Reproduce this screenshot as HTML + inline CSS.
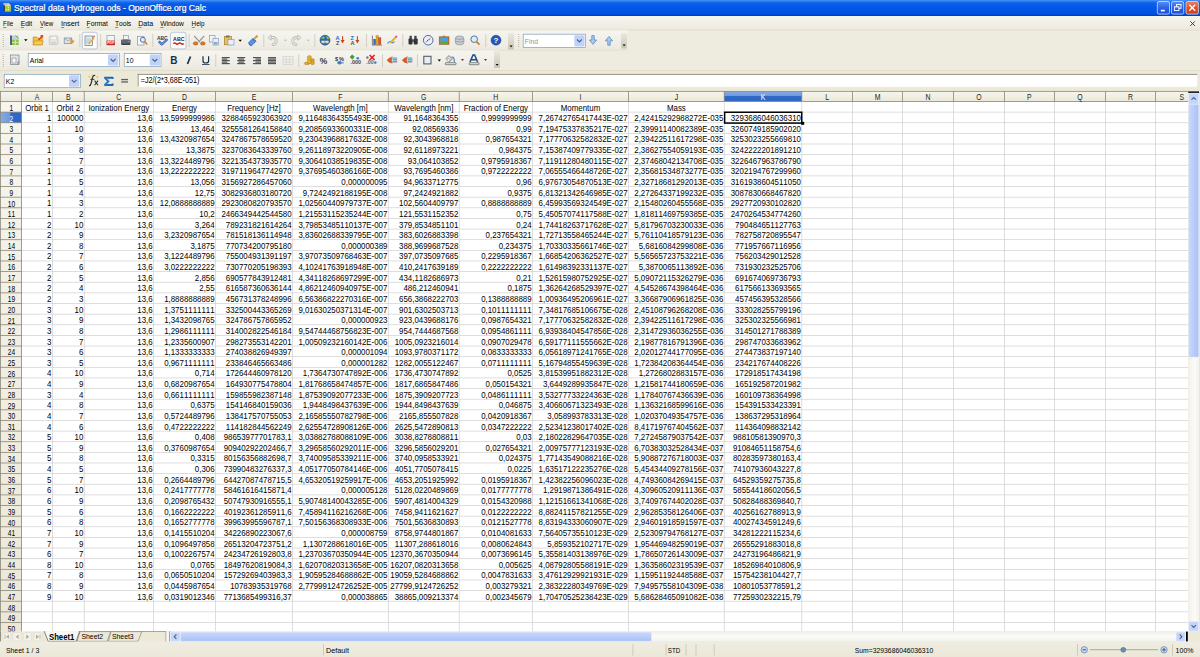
<!DOCTYPE html><html><head><meta charset="utf-8"><style>
*{margin:0;padding:0;box-sizing:border-box}
html,body{width:1200px;height:657px;overflow:hidden;background:#ece9d8;font-family:"Liberation Sans",sans-serif}
.a{position:absolute}
.t{position:absolute;white-space:nowrap;line-height:1}
svg{position:absolute;left:0;top:0}

</style></head><body>
<svg width="1200" height="657" viewBox="0 0 1200 657" style="font-family:'Liberation Sans',sans-serif;font-kerning:none"><defs>
<linearGradient id="gTitle" x1="0" y1="0" x2="0" y2="1">
 <stop offset="0" stop-color="#4a98fa"/><stop offset="0.08" stop-color="#2a7af2"/><stop offset="0.2" stop-color="#0c5fea"/>
 <stop offset="0.6" stop-color="#0055e5"/><stop offset="0.88" stop-color="#0052e2"/><stop offset="0.94" stop-color="#0044cc"/><stop offset="1" stop-color="#003cb8"/>
</linearGradient>
<linearGradient id="gMenu" x1="0" y1="0" x2="0" y2="1">
 <stop offset="0" stop-color="#f7f6f1"/><stop offset="1" stop-color="#ebe9dd"/>
</linearGradient>
<linearGradient id="gTB" x1="0" y1="0" x2="0" y2="1">
 <stop offset="0" stop-color="#f6f5f0"/><stop offset="1" stop-color="#ebe9df"/>
</linearGradient>
<linearGradient id="gHdr" x1="0" y1="0" x2="0" y2="1">
 <stop offset="0" stop-color="#f7f6ee"/><stop offset="1" stop-color="#ebe8d8"/>
</linearGradient>
<linearGradient id="gSel" x1="0" y1="0" x2="0" y2="1">
 <stop offset="0" stop-color="#86abe6"/><stop offset="0.45" stop-color="#6e98de"/><stop offset="0.5" stop-color="#3169c6"/><stop offset="1" stop-color="#2e66c6"/>
</linearGradient>
<linearGradient id="gSelH" x1="0" y1="0" x2="1" y2="0">
 <stop offset="0" stop-color="#86abe6"/><stop offset="0.45" stop-color="#6e98de"/><stop offset="0.5" stop-color="#3169c6"/><stop offset="1" stop-color="#2e66c6"/>
</linearGradient>
<linearGradient id="gBtn" x1="0" y1="0" x2="0" y2="1">
 <stop offset="0" stop-color="#5a8ef5"/><stop offset="0.5" stop-color="#2a63e8"/><stop offset="1" stop-color="#1d4fd8"/>
</linearGradient>
<linearGradient id="gClose" x1="0" y1="0" x2="0" y2="1">
 <stop offset="0" stop-color="#e9805e"/><stop offset="0.5" stop-color="#e0542e"/><stop offset="1" stop-color="#cc3d18"/>
</linearGradient>
<linearGradient id="gHandle" x1="0" y1="0" x2="0" y2="1">
 <stop offset="0" stop-color="#ebe9df"/><stop offset="1" stop-color="#c9c6b4"/>
</linearGradient>
<linearGradient id="gScrollV" x1="0" y1="0" x2="1" y2="0">
 <stop offset="0" stop-color="#c8d6fb"/><stop offset="0.5" stop-color="#b9cdfa"/><stop offset="1" stop-color="#a9c0f4"/>
</linearGradient>
<linearGradient id="gScrollH" x1="0" y1="0" x2="0" y2="1">
 <stop offset="0" stop-color="#c8d6fb"/><stop offset="0.5" stop-color="#b9cdfa"/><stop offset="1" stop-color="#a9c0f4"/>
</linearGradient>
<linearGradient id="gTrackH" x1="0" y1="0" x2="0" y2="1">
 <stop offset="0" stop-color="#f0efe9"/><stop offset="0.5" stop-color="#fbfbf9"/><stop offset="1" stop-color="#f3f2ec"/>
</linearGradient>
<linearGradient id="gTrackV" x1="0" y1="0" x2="1" y2="0">
 <stop offset="0" stop-color="#f0efe9"/><stop offset="0.5" stop-color="#fbfbf9"/><stop offset="1" stop-color="#f3f2ec"/>
</linearGradient>
<linearGradient id="gStatus" x1="0" y1="0" x2="0" y2="1">
 <stop offset="0" stop-color="#efede2"/><stop offset="1" stop-color="#ebe8d8"/>
</linearGradient>
</defs><rect x="0" y="0" width="1200" height="16" fill="url(#gTitle)"/><path d="M3.4 3 h5.4 l2 2 v6.6 h-7.4z" fill="#d6dadc" stroke="#60686e" stroke-width="0.4"/><rect x="3.3" y="5.2" width="1.5" height="6.4" fill="#1e262e"/><rect x="5" y="6.2" width="5.8" height="5.2" fill="#a8c82c"/><circle cx="8.4" cy="7.6" r="0.6" fill="#f0f6e0"/><circle cx="6.4" cy="9.6" r="0.6" fill="#f0f6e0"/><circle cx="8.4" cy="9.6" r="0.6" fill="#f0f6e0"/><path d="M4 4.3 h4 M4 5 h3" stroke="#a0a8ac" stroke-width="0.4"/><text transform="translate(14.5 11.8) scale(1 1.12)" font-size="8.3" fill="#0a2a80" stroke="#0a2a80" stroke-width="0.25" opacity="0.4" textLength="192" lengthAdjust="spacingAndGlyphs">Spectral data Hydrogen.ods - OpenOffice.org Calc</text><text transform="translate(14 11.3) scale(1 1.12)" font-size="8.3" fill="#ffffff" stroke="#ffffff" stroke-width="0.22" textLength="192" lengthAdjust="spacingAndGlyphs">Spectral data Hydrogen.ods - OpenOffice.org Calc</text><rect x="1157.3" y="1.5" width="12.2" height="12.6" rx="1.6" fill="url(#gBtn)" stroke="#e8eefc" stroke-width="0.7"/><rect x="1171.5" y="1.5" width="12.2" height="12.6" rx="1.6" fill="url(#gBtn)" stroke="#e8eefc" stroke-width="0.7"/><rect x="1160.8" y="9.8" width="4" height="1.6" fill="#fff"/><rect x="1176.5" y="4.5" width="4.5" height="3.8" fill="none" stroke="#fff" stroke-width="0.9"/><rect x="1174.4" y="6.8" width="4.5" height="3.8" fill="url(#gBtn)" stroke="#fff" stroke-width="0.9"/><rect x="1186" y="1.5" width="12.4" height="12.6" rx="1.6" fill="url(#gClose)" stroke="#f2e6e0" stroke-width="0.7"/><path d="M1189.3 4.8 L1195.2 10.8 M1195.2 4.8 L1189.3 10.8" stroke="#fff" stroke-width="1.3"/><rect x="0" y="16" width="1200" height="14.4" fill="url(#gMenu)"/><rect x="0" y="29.8" width="1200" height="0.7" fill="#d6d2c2"/><text transform="translate(3.1 26.4) scale(1 1.12)" font-size="7" fill="#000" textLength="10.0" lengthAdjust="spacingAndGlyphs">File</text><rect x="3.3000000000000003" y="27.1" width="3" height="0.6" fill="#000" opacity="0.7"/><text transform="translate(20.7 26.4) scale(1 1.12)" font-size="7" fill="#000" textLength="11.5" lengthAdjust="spacingAndGlyphs">Edit</text><rect x="20.9" y="27.1" width="3" height="0.6" fill="#000" opacity="0.7"/><text transform="translate(39.9 26.4) scale(1 1.12)" font-size="7" fill="#000" textLength="13.3" lengthAdjust="spacingAndGlyphs">View</text><rect x="40.1" y="27.1" width="3" height="0.6" fill="#000" opacity="0.7"/><text transform="translate(60.9 26.4) scale(1 1.12)" font-size="7" fill="#000" textLength="18.3" lengthAdjust="spacingAndGlyphs">Insert</text><rect x="61.1" y="27.1" width="3" height="0.6" fill="#000" opacity="0.7"/><text transform="translate(86.5 26.4) scale(1 1.12)" font-size="7" fill="#000" textLength="21.4" lengthAdjust="spacingAndGlyphs">Format</text><rect x="86.7" y="27.1" width="3" height="0.6" fill="#000" opacity="0.7"/><text transform="translate(114.9 26.4) scale(1 1.12)" font-size="7" fill="#000" textLength="16.3" lengthAdjust="spacingAndGlyphs">Tools</text><rect x="115.10000000000001" y="27.1" width="3" height="0.6" fill="#000" opacity="0.7"/><text transform="translate(138.2 26.4) scale(1 1.12)" font-size="7" fill="#000" textLength="15.0" lengthAdjust="spacingAndGlyphs">Data</text><rect x="138.39999999999998" y="27.1" width="3" height="0.6" fill="#000" opacity="0.7"/><text transform="translate(160.2 26.4) scale(1 1.12)" font-size="7" fill="#000" textLength="23.7" lengthAdjust="spacingAndGlyphs">Window</text><rect x="160.39999999999998" y="27.1" width="3" height="0.6" fill="#000" opacity="0.7"/><text transform="translate(191.6 26.4) scale(1 1.12)" font-size="7" fill="#000" textLength="12.9" lengthAdjust="spacingAndGlyphs">Help</text><rect x="191.79999999999998" y="27.1" width="3" height="0.6" fill="#000" opacity="0.7"/><path d="M1190.3 21.3 L1194.9 25.9 M1194.9 21.3 L1190.3 25.9" stroke="#404040" stroke-width="1"/><rect x="0" y="30.5" width="1200" height="39.5" fill="#eeecdf"/><rect x="0" y="30.5" width="515" height="19.8" fill="url(#gTB)"/><rect x="515.5" y="30.5" width="112" height="19.8" fill="url(#gTB)"/><rect x="0" y="49.8" width="515" height="0.6" fill="#dcd9cb"/><rect x="515.5" y="49.8" width="112" height="0.6" fill="#dcd9cb"/><rect x="2.8" y="34.00" width="0.9" height="0.9" fill="#a8a590"/><rect x="2.8" y="36.00" width="0.9" height="0.9" fill="#a8a590"/><rect x="2.8" y="38.00" width="0.9" height="0.9" fill="#a8a590"/><rect x="2.8" y="40.00" width="0.9" height="0.9" fill="#a8a590"/><rect x="2.8" y="42.00" width="0.9" height="0.9" fill="#a8a590"/><rect x="2.8" y="44.00" width="0.9" height="0.9" fill="#a8a590"/><rect x="2.8" y="46.00" width="0.9" height="0.9" fill="#a8a590"/><rect x="518.3" y="34.00" width="0.9" height="0.9" fill="#a8a590"/><rect x="518.3" y="36.00" width="0.9" height="0.9" fill="#a8a590"/><rect x="518.3" y="38.00" width="0.9" height="0.9" fill="#a8a590"/><rect x="518.3" y="40.00" width="0.9" height="0.9" fill="#a8a590"/><rect x="518.3" y="42.00" width="0.9" height="0.9" fill="#a8a590"/><rect x="518.3" y="44.00" width="0.9" height="0.9" fill="#a8a590"/><rect x="518.3" y="46.00" width="0.9" height="0.9" fill="#a8a590"/><rect x="508" y="33" width="6" height="16.5" fill="url(#gHandle)"/><path d="M509.6 45.5 h3 l-1.5 1.8z" fill="#000"/><rect x="621" y="33" width="6" height="15.5" fill="url(#gHandle)"/><path d="M622.6 44.5 h3 l-1.5 1.8z" fill="#000"/><rect x="79.5" y="34" width="0.7" height="13" fill="#c5c2b2"/><rect x="100.4" y="34" width="0.7" height="13" fill="#c5c2b2"/><rect x="152.5" y="34" width="0.7" height="13" fill="#c5c2b2"/><rect x="188.7" y="34" width="0.7" height="13" fill="#c5c2b2"/><rect x="263.5" y="34" width="0.7" height="13" fill="#c5c2b2"/><rect x="314.5" y="34" width="0.7" height="13" fill="#c5c2b2"/><rect x="366" y="34" width="0.7" height="13" fill="#c5c2b2"/><rect x="402.5" y="34" width="0.7" height="13" fill="#c5c2b2"/><rect x="485.5" y="34" width="0.7" height="13" fill="#c5c2b2"/><rect x="82.3" y="32.3" width="15" height="16.6" rx="2" fill="#fbfbf8" stroke="#9fb4d2" stroke-width="0.7"/><rect x="170.5" y="32.3" width="15.5" height="16.6" rx="2" fill="#fbfbf8" stroke="#9fb4d2" stroke-width="0.7"/><rect x="10.2" y="35.5" width="8.4" height="9.5" fill="#c6d0d8"/><rect x="10.2" y="35.5" width="1.6" height="9.5" fill="#2c4a70"/><rect x="12" y="39.8" width="6.6" height="5.2" fill="#8cc43c"/><path d="M12 42.4 h6.6 M15.3 39.8 v5.2" stroke="#f0f8e0" stroke-width="0.7"/><path d="M15.5 35.5 l3.1 3" stroke="#5a9a30" stroke-width="0.8"/><path d="M24.1 39.3 h3.4 l-1.7 1.87z" fill="#000"/><path d="M33.2 37 h3.5 l1 1.2 h4.5 v6.6 h-9z" fill="#f0c040" stroke="#c07a10" stroke-width="0.6"/><path d="M34.5 41 h8.8 l-1.3 3.8 h-8.8z" fill="#f8d050" stroke="#c07a10" stroke-width="0.5"/><path d="M38.5 40 l3.5 -3.5" stroke="#d04010" stroke-width="1.3"/><rect x="40.6" y="35" width="2.6" height="2.6" fill="#e04818"/><rect x="49.3" y="36" width="8.6" height="8.6" rx="0.8" fill="#e6e6e2" stroke="#c0c0bc" stroke-width="0.7"/><rect x="51" y="36.4" width="5.2" height="3.4" fill="#f6f6f4" stroke="#c8c8c4" stroke-width="0.4"/><rect x="51" y="41.8" width="5.2" height="2.5" fill="#d4d4d0"/><rect x="64.2" y="38" width="7.5" height="5.6" fill="#dfe4ea" stroke="#7a8694" stroke-width="0.7"/><path d="M64.4 38.3 l3.6 2.6 l3.6 -2.6" fill="none" stroke="#7a8694" stroke-width="0.6"/><path d="M70 41.5 l2 -2 l2 2 l-2 2z" fill="#f0a030" stroke="#c06a10" stroke-width="0.5"/><rect x="85" y="36" width="7.5" height="9.5" fill="#e8eef6" stroke="#506070" stroke-width="0.6"/><path d="M86 39 h5 M86 41 h5 M86 43 h4" stroke="#8aa0b8" stroke-width="0.6"/><path d="M88.5 44 l5.5 -6" stroke="#e8b020" stroke-width="1.6"/><path d="M93.2 37.2 l1.5 -1.5" stroke="#e06080" stroke-width="1.6"/><rect x="107" y="35.5" width="7.4" height="9.5" fill="#f4f4f4" stroke="#8090a0" stroke-width="0.6"/><rect x="106.6" y="40.6" width="8.2" height="4.4" fill="#d42020"/><text x="107.2" y="44.2" font-size="3.6" font-weight="bold" fill="#fff">PDF</text><rect x="123.5" y="35.5" width="5" height="4" fill="#f0f4f8" stroke="#6a7888" stroke-width="0.5"/><rect x="121" y="39.5" width="9.6" height="5" rx="0.8" fill="#606870"/><rect x="121.5" y="43.6" width="8.6" height="1.3" fill="#30383e"/><rect x="128.2" y="41" width="1.2" height="0.9" fill="#6ec040"/><rect x="137.5" y="36.5" width="6.5" height="8.5" fill="#f6f8fa" stroke="#7888a0" stroke-width="0.6"/><circle cx="142.8" cy="39.8" r="2.5" fill="#d8ecfa" stroke="#405870" stroke-width="0.8"/><path d="M144.6 41.6 l2.6 2.8" stroke="#c08020" stroke-width="1.4"/><text transform="translate(157 40.4) scale(1 1.1)" font-size="4.9" font-weight="bold" fill="#2a3a50">ABC</text><path d="M158.8 41.4 l3 3 l5.6 -5.2" fill="none" stroke="#2a5ab0" stroke-width="2.2" stroke-linejoin="round"/><path d="M158.8 41.4 l3 3 l5.6 -5.2" fill="none" stroke="#7ab8f0" stroke-width="1" stroke-linejoin="round"/><text transform="translate(173.1 41.3) scale(1 1.15)" font-size="5.3" font-weight="bold" fill="#1e2c3c">ABC</text><path d="M173.3 43.6 q1.3 -1.3 2.6 0 t2.6 0 t2.6 0 t2.6 0" fill="none" stroke="#e01818" stroke-width="1.4"/><path d="M194.2 35.8 l5.6 6.4 M204.2 35.8 l-5.6 6.4" stroke="#8a9098" stroke-width="1.1"/><ellipse cx="195.6" cy="43.4" rx="2.3" ry="1.7" fill="#e07818" stroke="#a04a08" stroke-width="0.5"/><ellipse cx="202.8" cy="43.4" rx="2.3" ry="1.7" fill="#e07818" stroke="#a04a08" stroke-width="0.5"/><rect x="209.5" y="35.5" width="5.5" height="6.5" fill="#f0f4fa" stroke="#7890b0" stroke-width="0.6"/><rect x="213" y="38.5" width="5.5" height="6.5" fill="#e8f0fa" stroke="#7890b0" stroke-width="0.6"/><rect x="214" y="42" width="3.5" height="2.5" fill="#8aa6cc"/><rect x="224.3" y="36.5" width="7" height="8.3" fill="#e8c060" stroke="#a07020" stroke-width="0.6"/><rect x="226" y="35.5" width="3.5" height="2" fill="#707070"/><rect x="228" y="39.5" width="6" height="5.5" fill="#e8f0f8" stroke="#7890b0" stroke-width="0.6"/><path d="M238.5 39.8 h3.4 l-1.7 1.87z" fill="#000"/><path d="M248.5 42.8 l4.6 -4.6 l3 3 l-4.6 4.6 q-2 0.4 -3 -3z" fill="#4a86e0" stroke="#2050a0" stroke-width="0.6"/><path d="M250 42 l3 3 M251.5 40.5 l3 3" stroke="#a8c8f8" stroke-width="0.5"/><path d="M254.6 38.6 l3 -3" stroke="#e09020" stroke-width="2"/><g><path d="M270 37.8 q4.5 -1.5 6 2 q1 4 -3 4.8" fill="none" stroke="#b4b4ae" stroke-width="2.8" stroke-linecap="round"/><path d="M270 37.8 q4.5 -1.5 6 2 q1 4 -3 4.8" fill="none" stroke="#ecece8" stroke-width="1.4" stroke-linecap="round"/><path d="M268 37.5 l3.2 -2.6 v5.4z" fill="#ecece8" stroke="#b4b4ae" stroke-width="0.7"/></g><path d="M284 39.8 h2.6 l-1.3 1.5z" fill="#b0b0a8"/><g transform="translate(592 0) scale(-1 1)"><path d="M293 37.8 q4.5 -1.5 6 2 q1 4 -3 4.8" fill="none" stroke="#b4b4ae" stroke-width="2.8" stroke-linecap="round"/><path d="M293 37.8 q4.5 -1.5 6 2 q1 4 -3 4.8" fill="none" stroke="#ecece8" stroke-width="1.4" stroke-linecap="round"/><path d="M291 37.5 l3.2 -2.6 v5.4z" fill="#ecece8" stroke="#b4b4ae" stroke-width="0.7"/></g><path d="M307 39.8 h2.6 l-1.3 1.5z" fill="#b0b0a8"/><circle cx="325" cy="40.2" r="5" fill="#2a6ab8" stroke="#1a3a68" stroke-width="0.5"/><path d="M321.2 38.2 q1.5 -2.5 3.5 -1.2 q0.5 1.5 -1.5 2 z M325.8 36.3 q2.5 0 3.6 2.4 l-2 0.6z" fill="#8ac838"/><rect x="321" y="40.6" width="8" height="2.6" rx="1.2" fill="#e4e8e8" stroke="#4a5a60" stroke-width="0.5"/><path d="M325 40.6 v2.6" stroke="#4a5a60" stroke-width="0.5"/><text x="335.6" y="39.6" font-size="5.6" font-weight="bold" fill="#1a6ad8">A</text><text x="335.9" y="45.4" font-size="5.6" font-weight="bold" fill="#4a5058">Z</text><path d="M342.6 36.2 v4.8" stroke="#d04020" stroke-width="1.1"/><path d="M340.6 40 h4 l-2 3.4z" fill="#d04020"/><text x="350.6" y="39.6" font-size="5.6" font-weight="bold" fill="#1a6ad8">Z</text><text x="350.4" y="45.4" font-size="5.6" font-weight="bold" fill="#4a5058">A</text><path d="M357.4 36.2 v4.8" stroke="#d04020" stroke-width="1.1"/><path d="M355.4 40 h4 l-2 3.4z" fill="#d04020"/><path d="M372.4 35.5 v9.6 h9.6" fill="none" stroke="#606870" stroke-width="0.8"/><rect x="373.6" y="39.2" width="2.1" height="5.3" fill="#2a70d0" stroke="#1a4080" stroke-width="0.3"/><rect x="376" y="35.6" width="2.3" height="8.9" fill="#f0a020" stroke="#a06010" stroke-width="0.3"/><rect x="378.6" y="37.8" width="2.3" height="6.7" fill="#e05020" stroke="#903010" stroke-width="0.3"/><path d="M387.5 43.5 q2 -3 4 -1 q1.5 1 3 -1" fill="none" stroke="#3a8ad8" stroke-width="1.1"/><path d="M390 43 l6 -6" stroke="#e8b020" stroke-width="1.8"/><path d="M395.5 37.5 l1.5 -1.5" stroke="#e06080" stroke-width="1.8"/><rect x="408.5" y="38.5" width="4" height="6" rx="1" fill="#303438"/><rect x="413.7" y="38.5" width="4" height="6" rx="1" fill="#303438"/><rect x="409.5" y="35.8" width="2.3" height="3.5" fill="#404448"/><rect x="414.3" y="35.8" width="2.3" height="3.5" fill="#404448"/><rect x="412" y="39.5" width="2" height="2.5" fill="#505458"/><circle cx="428.2" cy="40.2" r="4.8" fill="#eaf0f8" stroke="#3a60a0" stroke-width="0.9"/><path d="M425.5 43 l2 -3.2 l0.8 0.8z" fill="#2a50d0"/><path d="M431 37.2 l-2 3.3 l-0.8 -0.8z" fill="#e02020"/><rect x="439.2" y="36.8" width="9.8" height="7.6" fill="#c07830" stroke="#805020" stroke-width="0.5"/><rect x="440.5" y="38" width="7.2" height="5.2" fill="#4aa0e0"/><path d="M440.5 43.2 l2.5 -2.5 l2 1.5 l2.7 -2 v3z" fill="#50b030"/><path d="M442.5 36.8 l1.6 -1.3 l1.6 1.3" fill="none" stroke="#805020" stroke-width="0.5"/><rect x="455.3" y="36" width="8.6" height="8.8" rx="3" fill="#c8ccd0" stroke="#808890" stroke-width="0.6"/><path d="M455.5 38.7 q4.3 1.5 8.4 0 M455.5 41.3 q4.3 1.5 8.4 0" fill="none" stroke="#808890" stroke-width="0.6"/><circle cx="474.2" cy="39.2" r="3.3" fill="#d8ecfa" stroke="#4a6a90" stroke-width="0.9"/><path d="M476.5 41.6 l3 3" stroke="#c08020" stroke-width="1.6"/><circle cx="496" cy="40.2" r="5" fill="#2458b8" stroke="#1a3a88" stroke-width="0.5"/><text x="493.6" y="43.4" font-size="8" font-weight="bold" fill="#fff">?</text><rect x="523.2" y="34.2" width="62.3" height="13.2" fill="#fff" stroke="#7f9db9" stroke-width="0.7"/><rect x="574.3" y="35.2" width="10.2" height="11.3" rx="1" fill="#c0d2fa"/><path d="M577 39.5 l2.4 2.4 l2.4 -2.4" fill="none" stroke="#4d6185" stroke-width="1.1"/><text transform="translate(524.8 44.2) scale(1 1.15)" font-size="6.8" fill="#959595">Find</text><path d="M591.8 35.6 h2.4 v4.4 h2.4 l-3.6 4.3 l-3.6 -4.3 h2.4z" fill="#a8ccee" stroke="#4a80b8" stroke-width="0.7" stroke-linejoin="round"/><path d="M607.8 45.2 h2.4 v-4.4 h2.4 l-3.6 -4.3 l-3.6 4.3 h2.4z" fill="#a8ccee" stroke="#4a80b8" stroke-width="0.7" stroke-linejoin="round"/><rect x="0" y="50.5" width="500" height="19.5" fill="url(#gTB)"/><rect x="0" y="70" width="1200" height="0.7" fill="#cdc9b6"/><rect x="2.8" y="54.00" width="0.9" height="0.9" fill="#a8a590"/><rect x="2.8" y="56.00" width="0.9" height="0.9" fill="#a8a590"/><rect x="2.8" y="58.00" width="0.9" height="0.9" fill="#a8a590"/><rect x="2.8" y="60.00" width="0.9" height="0.9" fill="#a8a590"/><rect x="2.8" y="62.00" width="0.9" height="0.9" fill="#a8a590"/><rect x="2.8" y="64.00" width="0.9" height="0.9" fill="#a8a590"/><rect x="2.8" y="66.00" width="0.9" height="0.9" fill="#a8a590"/><rect x="494" y="51" width="6" height="17" fill="url(#gHandle)"/><path d="M495.6 64 h3 l-1.5 1.8z" fill="#000"/><rect x="215.5" y="54" width="0.7" height="13" fill="#c5c2b2"/><rect x="298.5" y="54" width="0.7" height="13" fill="#c5c2b2"/><rect x="382" y="54" width="0.7" height="13" fill="#c5c2b2"/><rect x="417" y="54" width="0.7" height="13" fill="#c5c2b2"/><rect x="10.5" y="55" width="8.5" height="9.5" fill="#e4e6e8" stroke="#6a7078" stroke-width="0.6"/><rect x="12" y="58" width="4" height="5" fill="#f8f8f8" stroke="#6a7078" stroke-width="0.5"/><path d="M17.5 62 v2.5 M18.8 60.5 v4" stroke="#6a7078" stroke-width="0.5"/><rect x="28.2" y="53.6" width="91.1" height="12.999999999999993" fill="#fff" stroke="#7f9db9" stroke-width="0.7"/><rect x="108.0" y="54.6" width="10.3" height="10.999999999999993" rx="1" fill="#c0d2fa"/><path d="M110.74999999999999 58.99999999999999 l2.4 2.4 l2.4 -2.4" fill="none" stroke="#4d6185" stroke-width="1.1"/><text transform="translate(29.8 62.89999999999999) scale(1 1.15)" font-size="6.9" fill="#000">Arial</text><rect x="124.2" y="53.6" width="36.8" height="12.999999999999993" fill="#fff" stroke="#7f9db9" stroke-width="0.7"/><rect x="149.7" y="54.6" width="10.3" height="10.999999999999993" rx="1" fill="#c0d2fa"/><path d="M152.45 58.99999999999999 l2.4 2.4 l2.4 -2.4" fill="none" stroke="#4d6185" stroke-width="1.1"/><text transform="translate(125.8 62.89999999999999) scale(1 1.15)" font-size="6.9" fill="#000">10</text><text x="170.3" y="64" font-size="10" font-weight="bold" fill="#1c3048">B</text><path d="M190.5 56.5 l-3 7.5" stroke="#1c3048" stroke-width="1.7"/><path d="M203 56.3 v4.7 q0 2 2.8 2 q2.8 0 2.8 -2 v-4.7" fill="none" stroke="#1c3048" stroke-width="1.2"/><rect x="202" y="64.2" width="7.5" height="0.8" fill="#1c3048"/><rect x="221.8" y="57" width="8" height="1.2" fill="#505458"/><rect x="221.8" y="58.5" width="5.5" height="1.2" fill="#505458"/><rect x="221.8" y="60" width="8" height="1.2" fill="#505458"/><rect x="221.8" y="61.5" width="5.5" height="1.2" fill="#505458"/><rect x="221.8" y="63" width="8" height="1.2" fill="#505458"/><rect x="237.2" y="57" width="8" height="1.2" fill="#505458"/><rect x="238.45" y="58.5" width="5.5" height="1.2" fill="#505458"/><rect x="237.2" y="60" width="8" height="1.2" fill="#505458"/><rect x="238.45" y="61.5" width="5.5" height="1.2" fill="#505458"/><rect x="237.2" y="63" width="8" height="1.2" fill="#505458"/><rect x="253" y="57" width="8" height="1.2" fill="#505458"/><rect x="255.5" y="58.5" width="5.5" height="1.2" fill="#505458"/><rect x="253" y="60" width="8" height="1.2" fill="#505458"/><rect x="255.5" y="61.5" width="5.5" height="1.2" fill="#505458"/><rect x="253" y="63" width="8" height="1.2" fill="#505458"/><rect x="268" y="57" width="8" height="1.2" fill="#505458"/><rect x="268" y="58.5" width="8" height="1.2" fill="#505458"/><rect x="268" y="60" width="8" height="1.2" fill="#505458"/><rect x="268" y="61.5" width="8" height="1.2" fill="#505458"/><rect x="268" y="63" width="8" height="1.2" fill="#505458"/><rect x="283" y="56.5" width="10" height="8" fill="none" stroke="#d0d0cc" stroke-width="0.7"/><path d="M283 59.2 h10 M283 61.9 h10 M286.3 56.5 v8 M289.6 56.5 v8" stroke="#d0d0cc" stroke-width="0.6"/><ellipse cx="307" cy="63.4" rx="2.8" ry="1.3" fill="#e0a830" stroke="#a87010" stroke-width="0.4"/><rect x="307.6" y="55.8" width="3.6" height="7.6" rx="0.8" fill="#e8b838" stroke="#a87010" stroke-width="0.45"/><rect x="311" y="58.8" width="3.2" height="5.8" rx="0.8" fill="#e0a828" stroke="#a87010" stroke-width="0.45"/><path d="M307.8 58 h3.2 M307.8 60 h3.2 M311.2 61 h2.8" stroke="#b88018" stroke-width="0.4"/><text transform="translate(319.8 63.6) scale(1 1.05)" font-size="8.4" font-weight="bold" fill="#2c3a48">%</text><text x="335" y="60.6" font-size="5.6" font-weight="bold" fill="#2c3a48">$</text><text x="339" y="60.6" font-size="5.6" font-weight="bold" fill="#2c3a48">%</text><ellipse cx="339.6" cy="62.8" rx="2.4" ry="1.7" fill="#3a80d0"/><path d="M341.5 62.8 l2 -1 v2z" fill="#3a80d0"/><path d="M352.2 54.8 l2.2 2.2 l-2.2 2.2 l-2.2 -2.2z" fill="#40a030" stroke="#2a7020" stroke-width="0.4"/><circle cx="357.8" cy="58.3" r="1.3" fill="#3a78d8"/><text x="350.4" y="64.4" font-size="5.4" font-weight="bold" fill="#404850">.000</text><circle cx="367.4" cy="57.5" r="1.2" fill="#707880"/><path d="M369.6 55 l5 5 M374.6 55 l-5 5" stroke="#e02020" stroke-width="1.6"/><text x="366.3" y="64.4" font-size="5.4" font-weight="bold" fill="#606870">.00</text><circle cx="375.3" cy="62.6" r="1.3" fill="#4a80d8"/><path d="M392.5 56.2 l-2 1.6 h6.5 M392.5 63.8 l-2 -1.6 h6.5" fill="none" stroke="#707478" stroke-width="0.6"/><rect x="392.6" y="58.6" width="4.6" height="1.1" fill="#2a88d8"/><rect x="392.6" y="60.6" width="4.6" height="1.1" fill="#2a88d8"/><path d="M387 60.2 l2.4 -2.3 h2.2 v4.6 h-2.2z" fill="#e05a20" stroke="#b04010" stroke-width="0.4"/><path d="M407.7 56.2 l-2 1.6 h6.5 M407.7 63.8 l-2 -1.6 h6.5" fill="none" stroke="#707478" stroke-width="0.6"/><rect x="407.8" y="58.6" width="4.6" height="1.1" fill="#2a88d8"/><rect x="407.8" y="60.6" width="4.6" height="1.1" fill="#2a88d8"/><path d="M402.2 60.2 l2.4 -2.3 h2.2 v4.6 h-2.2z" fill="#e05a20" stroke="#b04010" stroke-width="0.4"/><rect x="423.8" y="56.3" width="7.2" height="7.6" fill="#e8eef6" stroke="#5a5e62" stroke-width="1.1"/><path d="M437.6 59.6 h3.4 l-1.7 1.87z" fill="#000"/><path d="M446 58.5 l3 -3 l3.4 3.4 l-3 3 z" fill="#d8dce0" stroke="#606468" stroke-width="0.7"/><circle cx="448.5" cy="60" r="1.5" fill="#f0f2f4" stroke="#707478" stroke-width="0.4"/><path d="M451.5 57 q3 -0.5 2.8 5" fill="none" stroke="#2a80d0" stroke-width="1.1"/><rect x="445.4" y="62.7" width="10.6" height="2" rx="0.4" fill="#e8e6dc" stroke="#404448" stroke-width="0.6"/><path d="M461 59.2 h3 l-1.5 1.6500000000000001z" fill="#000"/><path d="M470 62 l3 -7 h1.6 l3 7 M471.6 59.8 h4.4" fill="none" stroke="#1e4c8c" stroke-width="1.5"/><rect x="469.2" y="62.7" width="9.8" height="2" rx="0.4" fill="#e8e6dc" stroke="#404448" stroke-width="0.6"/><path d="M484 59.2 h3 l-1.5 1.6500000000000001z" fill="#000"/><rect x="0" y="70.5" width="1200" height="20.8" fill="#ece9d8"/><rect x="4.2" y="74.3" width="76.1" height="13.400000000000006" fill="#fff" stroke="#7f9db9" stroke-width="0.7"/><rect x="69.0" y="75.3" width="10.3" height="11.400000000000006" rx="1" fill="#c0d2fa"/><path d="M71.74999999999999 79.9 l2.4 2.4 l2.4 -2.4" fill="none" stroke="#4d6185" stroke-width="1.1"/><text transform="translate(5.800000000000001 84.0) scale(1 1.15)" font-size="6.9" fill="#000">K2</text><path d="M89 85.6 q1.6 0.3 2.2 -2.5 l1.4 -6 q0.6 -1.9 2.6 -1.6" fill="none" stroke="#28323c" stroke-width="1.25"/><path d="M90.4 79.4 h4" stroke="#28323c" stroke-width="0.9"/><path d="M94.6 80.6 l3.4 4.6 M98 80.6 l-3.4 4.6" stroke="#28323c" stroke-width="1.05"/><circle cx="89.3" cy="76.6" r="0.95" fill="#f0c020"/><circle cx="92.3" cy="75" r="0.8" fill="#f0c020"/><circle cx="97.4" cy="77.2" r="0.9" fill="#f0c020"/><path d="M112.6 79 v-1.3 h-7.6 l3.5 3.6 l-3.5 3.6 h7.6 v-1.3" fill="none" stroke="#1e6ab8" stroke-width="2" stroke-linejoin="round"/><path d="M106 77.8 l3.3 3.5 l-3.3 3.5" fill="none" stroke="#9ad0f6" stroke-width="0.5"/><rect x="121.2" y="78.9" width="6.8" height="1.3" fill="#5a6064"/><rect x="121.2" y="81.3" width="6.8" height="1.3" fill="#5a6064"/><rect x="137.7" y="73.9" width="1059.5" height="13" fill="#fff"/><rect x="137.7" y="73.9" width="1059.5" height="0.9" fill="#8a877a"/><rect x="137.7" y="73.9" width="0.9" height="13" fill="#8a877a"/><rect x="137.7" y="86.4" width="1059.5" height="0.7" fill="#f8f7f2"/><text transform="translate(140.8 83.1) scale(1 1.2)" font-size="7.2" fill="#000">=J2/(2*3,68E-051)</text><rect x="21.6" y="101.47" width="1166.7" height="530.23" fill="#fff"/><rect x="0" y="91.3" width="1188.3" height="10.170000000000002" fill="url(#gHdr)"/><rect x="0" y="101.47" width="21.6" height="530.23" fill="url(#gHdr)"/><rect x="724.2" y="91.3" width="77.59999999999991" height="10.170000000000002" fill="url(#gSel)"/><rect x="0" y="112.103" width="21.6" height="10.633" fill="url(#gSelH)"/><rect x="21.6" y="111.753" width="1166.7" height="0.7" fill="#d0d0d0"/><rect x="21.6" y="122.386" width="1166.7" height="0.7" fill="#d0d0d0"/><rect x="21.6" y="133.019" width="1166.7" height="0.7" fill="#d0d0d0"/><rect x="21.6" y="143.652" width="1166.7" height="0.7" fill="#d0d0d0"/><rect x="21.6" y="154.285" width="1166.7" height="0.7" fill="#d0d0d0"/><rect x="21.6" y="164.918" width="1166.7" height="0.7" fill="#d0d0d0"/><rect x="21.6" y="175.551" width="1166.7" height="0.7" fill="#d0d0d0"/><rect x="21.6" y="186.184" width="1166.7" height="0.7" fill="#d0d0d0"/><rect x="21.6" y="196.817" width="1166.7" height="0.7" fill="#d0d0d0"/><rect x="21.6" y="207.450" width="1166.7" height="0.7" fill="#d0d0d0"/><rect x="21.6" y="218.083" width="1166.7" height="0.7" fill="#d0d0d0"/><rect x="21.6" y="228.716" width="1166.7" height="0.7" fill="#d0d0d0"/><rect x="21.6" y="239.349" width="1166.7" height="0.7" fill="#d0d0d0"/><rect x="21.6" y="249.982" width="1166.7" height="0.7" fill="#d0d0d0"/><rect x="21.6" y="260.615" width="1166.7" height="0.7" fill="#d0d0d0"/><rect x="21.6" y="271.248" width="1166.7" height="0.7" fill="#d0d0d0"/><rect x="21.6" y="281.881" width="1166.7" height="0.7" fill="#d0d0d0"/><rect x="21.6" y="292.514" width="1166.7" height="0.7" fill="#d0d0d0"/><rect x="21.6" y="303.147" width="1166.7" height="0.7" fill="#d0d0d0"/><rect x="21.6" y="313.780" width="1166.7" height="0.7" fill="#d0d0d0"/><rect x="21.6" y="324.413" width="1166.7" height="0.7" fill="#d0d0d0"/><rect x="21.6" y="335.046" width="1166.7" height="0.7" fill="#d0d0d0"/><rect x="21.6" y="345.679" width="1166.7" height="0.7" fill="#d0d0d0"/><rect x="21.6" y="356.312" width="1166.7" height="0.7" fill="#d0d0d0"/><rect x="21.6" y="366.945" width="1166.7" height="0.7" fill="#d0d0d0"/><rect x="21.6" y="377.578" width="1166.7" height="0.7" fill="#d0d0d0"/><rect x="21.6" y="388.211" width="1166.7" height="0.7" fill="#d0d0d0"/><rect x="21.6" y="398.844" width="1166.7" height="0.7" fill="#d0d0d0"/><rect x="21.6" y="409.477" width="1166.7" height="0.7" fill="#d0d0d0"/><rect x="21.6" y="420.110" width="1166.7" height="0.7" fill="#d0d0d0"/><rect x="21.6" y="430.743" width="1166.7" height="0.7" fill="#d0d0d0"/><rect x="21.6" y="441.376" width="1166.7" height="0.7" fill="#d0d0d0"/><rect x="21.6" y="452.009" width="1166.7" height="0.7" fill="#d0d0d0"/><rect x="21.6" y="462.642" width="1166.7" height="0.7" fill="#d0d0d0"/><rect x="21.6" y="473.275" width="1166.7" height="0.7" fill="#d0d0d0"/><rect x="21.6" y="483.908" width="1166.7" height="0.7" fill="#d0d0d0"/><rect x="21.6" y="494.541" width="1166.7" height="0.7" fill="#d0d0d0"/><rect x="21.6" y="505.174" width="1166.7" height="0.7" fill="#d0d0d0"/><rect x="21.6" y="515.807" width="1166.7" height="0.7" fill="#d0d0d0"/><rect x="21.6" y="526.440" width="1166.7" height="0.7" fill="#d0d0d0"/><rect x="21.6" y="537.073" width="1166.7" height="0.7" fill="#d0d0d0"/><rect x="21.6" y="547.706" width="1166.7" height="0.7" fill="#d0d0d0"/><rect x="21.6" y="558.339" width="1166.7" height="0.7" fill="#d0d0d0"/><rect x="21.6" y="568.972" width="1166.7" height="0.7" fill="#d0d0d0"/><rect x="21.6" y="579.605" width="1166.7" height="0.7" fill="#d0d0d0"/><rect x="21.6" y="590.238" width="1166.7" height="0.7" fill="#d0d0d0"/><rect x="21.6" y="600.871" width="1166.7" height="0.7" fill="#d0d0d0"/><rect x="21.6" y="611.504" width="1166.7" height="0.7" fill="#d0d0d0"/><rect x="21.6" y="622.137" width="1166.7" height="0.7" fill="#d0d0d0"/><rect x="52.050" y="101.47" width="0.7" height="530.23" fill="#d0d0d0"/><rect x="83.850" y="101.47" width="0.7" height="530.23" fill="#d0d0d0"/><rect x="153.150" y="101.47" width="0.7" height="530.23" fill="#d0d0d0"/><rect x="215.150" y="101.47" width="0.7" height="530.23" fill="#d0d0d0"/><rect x="292.150" y="101.47" width="0.7" height="530.23" fill="#d0d0d0"/><rect x="387.950" y="101.47" width="0.7" height="530.23" fill="#d0d0d0"/><rect x="458.850" y="101.47" width="0.7" height="530.23" fill="#d0d0d0"/><rect x="532.150" y="101.47" width="0.7" height="530.23" fill="#d0d0d0"/><rect x="628.150" y="101.47" width="0.7" height="530.23" fill="#d0d0d0"/><rect x="723.850" y="101.47" width="0.7" height="530.23" fill="#d0d0d0"/><rect x="801.450" y="101.47" width="0.7" height="530.23" fill="#d0d0d0"/><rect x="852.150" y="101.47" width="0.7" height="530.23" fill="#d0d0d0"/><rect x="902.150" y="101.47" width="0.7" height="530.23" fill="#d0d0d0"/><rect x="953.250" y="101.47" width="0.7" height="530.23" fill="#d0d0d0"/><rect x="1004.050" y="101.47" width="0.7" height="530.23" fill="#d0d0d0"/><rect x="1054.050" y="101.47" width="0.7" height="530.23" fill="#d0d0d0"/><rect x="1105.150" y="101.47" width="0.7" height="530.23" fill="#d0d0d0"/><rect x="1155.050" y="101.47" width="0.7" height="530.23" fill="#d0d0d0"/><rect x="0" y="90.95" width="1188.3" height="0.8" fill="#8a8778"/><rect x="0" y="101.07" width="1188.3" height="0.8" fill="#8a8778"/><rect x="21.200" y="91.3" width="0.8" height="10.170000000000002" fill="#8a8778"/><rect x="52.000" y="91.3" width="0.8" height="10.170000000000002" fill="#8a8778"/><rect x="83.800" y="91.3" width="0.8" height="10.170000000000002" fill="#8a8778"/><rect x="153.100" y="91.3" width="0.8" height="10.170000000000002" fill="#8a8778"/><rect x="215.100" y="91.3" width="0.8" height="10.170000000000002" fill="#8a8778"/><rect x="292.100" y="91.3" width="0.8" height="10.170000000000002" fill="#8a8778"/><rect x="387.900" y="91.3" width="0.8" height="10.170000000000002" fill="#8a8778"/><rect x="458.800" y="91.3" width="0.8" height="10.170000000000002" fill="#8a8778"/><rect x="532.100" y="91.3" width="0.8" height="10.170000000000002" fill="#8a8778"/><rect x="628.100" y="91.3" width="0.8" height="10.170000000000002" fill="#8a8778"/><rect x="723.800" y="91.3" width="0.8" height="10.170000000000002" fill="#8a8778"/><rect x="801.400" y="91.3" width="0.8" height="10.170000000000002" fill="#8a8778"/><rect x="852.100" y="91.3" width="0.8" height="10.170000000000002" fill="#8a8778"/><rect x="902.100" y="91.3" width="0.8" height="10.170000000000002" fill="#8a8778"/><rect x="953.200" y="91.3" width="0.8" height="10.170000000000002" fill="#8a8778"/><rect x="1004.000" y="91.3" width="0.8" height="10.170000000000002" fill="#8a8778"/><rect x="1054.000" y="91.3" width="0.8" height="10.170000000000002" fill="#8a8778"/><rect x="1105.100" y="91.3" width="0.8" height="10.170000000000002" fill="#8a8778"/><rect x="1155.000" y="91.3" width="0.8" height="10.170000000000002" fill="#8a8778"/><rect x="21.200000000000003" y="101.47" width="0.8" height="530.23" fill="#8a8778"/><rect x="0" y="91.3" width="0.8" height="540.4000000000001" fill="#8a8778"/><rect x="0" y="111.703" width="21.6" height="0.8" fill="#8a8778"/><rect x="0" y="122.336" width="21.6" height="0.8" fill="#8a8778"/><rect x="0" y="132.969" width="21.6" height="0.8" fill="#8a8778"/><rect x="0" y="143.602" width="21.6" height="0.8" fill="#8a8778"/><rect x="0" y="154.235" width="21.6" height="0.8" fill="#8a8778"/><rect x="0" y="164.868" width="21.6" height="0.8" fill="#8a8778"/><rect x="0" y="175.501" width="21.6" height="0.8" fill="#8a8778"/><rect x="0" y="186.134" width="21.6" height="0.8" fill="#8a8778"/><rect x="0" y="196.767" width="21.6" height="0.8" fill="#8a8778"/><rect x="0" y="207.400" width="21.6" height="0.8" fill="#8a8778"/><rect x="0" y="218.033" width="21.6" height="0.8" fill="#8a8778"/><rect x="0" y="228.666" width="21.6" height="0.8" fill="#8a8778"/><rect x="0" y="239.299" width="21.6" height="0.8" fill="#8a8778"/><rect x="0" y="249.932" width="21.6" height="0.8" fill="#8a8778"/><rect x="0" y="260.565" width="21.6" height="0.8" fill="#8a8778"/><rect x="0" y="271.198" width="21.6" height="0.8" fill="#8a8778"/><rect x="0" y="281.831" width="21.6" height="0.8" fill="#8a8778"/><rect x="0" y="292.464" width="21.6" height="0.8" fill="#8a8778"/><rect x="0" y="303.097" width="21.6" height="0.8" fill="#8a8778"/><rect x="0" y="313.730" width="21.6" height="0.8" fill="#8a8778"/><rect x="0" y="324.363" width="21.6" height="0.8" fill="#8a8778"/><rect x="0" y="334.996" width="21.6" height="0.8" fill="#8a8778"/><rect x="0" y="345.629" width="21.6" height="0.8" fill="#8a8778"/><rect x="0" y="356.262" width="21.6" height="0.8" fill="#8a8778"/><rect x="0" y="366.895" width="21.6" height="0.8" fill="#8a8778"/><rect x="0" y="377.528" width="21.6" height="0.8" fill="#8a8778"/><rect x="0" y="388.161" width="21.6" height="0.8" fill="#8a8778"/><rect x="0" y="398.794" width="21.6" height="0.8" fill="#8a8778"/><rect x="0" y="409.427" width="21.6" height="0.8" fill="#8a8778"/><rect x="0" y="420.060" width="21.6" height="0.8" fill="#8a8778"/><rect x="0" y="430.693" width="21.6" height="0.8" fill="#8a8778"/><rect x="0" y="441.326" width="21.6" height="0.8" fill="#8a8778"/><rect x="0" y="451.959" width="21.6" height="0.8" fill="#8a8778"/><rect x="0" y="462.592" width="21.6" height="0.8" fill="#8a8778"/><rect x="0" y="473.225" width="21.6" height="0.8" fill="#8a8778"/><rect x="0" y="483.858" width="21.6" height="0.8" fill="#8a8778"/><rect x="0" y="494.491" width="21.6" height="0.8" fill="#8a8778"/><rect x="0" y="505.124" width="21.6" height="0.8" fill="#8a8778"/><rect x="0" y="515.757" width="21.6" height="0.8" fill="#8a8778"/><rect x="0" y="526.390" width="21.6" height="0.8" fill="#8a8778"/><rect x="0" y="537.023" width="21.6" height="0.8" fill="#8a8778"/><rect x="0" y="547.656" width="21.6" height="0.8" fill="#8a8778"/><rect x="0" y="558.289" width="21.6" height="0.8" fill="#8a8778"/><rect x="0" y="568.922" width="21.6" height="0.8" fill="#8a8778"/><rect x="0" y="579.555" width="21.6" height="0.8" fill="#8a8778"/><rect x="0" y="590.188" width="21.6" height="0.8" fill="#8a8778"/><rect x="0" y="600.821" width="21.6" height="0.8" fill="#8a8778"/><rect x="0" y="611.454" width="21.6" height="0.8" fill="#8a8778"/><rect x="0" y="622.087" width="21.6" height="0.8" fill="#8a8778"/><text transform="translate(37.00 100.05) scale(1 1.22)" font-size="6.9" text-anchor="middle" fill="#1e1e1e">A</text><text transform="translate(68.30 100.05) scale(1 1.22)" font-size="6.9" text-anchor="middle" fill="#1e1e1e">B</text><text transform="translate(118.85 100.05) scale(1 1.22)" font-size="6.9" text-anchor="middle" fill="#1e1e1e">C</text><text transform="translate(184.50 100.05) scale(1 1.22)" font-size="6.9" text-anchor="middle" fill="#1e1e1e">D</text><text transform="translate(254.00 100.05) scale(1 1.22)" font-size="6.9" text-anchor="middle" fill="#1e1e1e">E</text><text transform="translate(340.40 100.05) scale(1 1.22)" font-size="6.9" text-anchor="middle" fill="#1e1e1e">F</text><text transform="translate(423.75 100.05) scale(1 1.22)" font-size="6.9" text-anchor="middle" fill="#1e1e1e">G</text><text transform="translate(495.85 100.05) scale(1 1.22)" font-size="6.9" text-anchor="middle" fill="#1e1e1e">H</text><text transform="translate(580.50 100.05) scale(1 1.22)" font-size="6.9" text-anchor="middle" fill="#1e1e1e">I</text><text transform="translate(676.35 100.05) scale(1 1.22)" font-size="6.9" text-anchor="middle" fill="#1e1e1e">J</text><text transform="translate(763.00 100.05) scale(1 1.22)" font-size="6.9" text-anchor="middle" fill="#fff">K</text><text transform="translate(827.15 100.05) scale(1 1.22)" font-size="6.9" text-anchor="middle" fill="#1e1e1e">L</text><text transform="translate(877.50 100.05) scale(1 1.22)" font-size="6.9" text-anchor="middle" fill="#1e1e1e">M</text><text transform="translate(928.05 100.05) scale(1 1.22)" font-size="6.9" text-anchor="middle" fill="#1e1e1e">N</text><text transform="translate(979.00 100.05) scale(1 1.22)" font-size="6.9" text-anchor="middle" fill="#1e1e1e">O</text><text transform="translate(1029.40 100.05) scale(1 1.22)" font-size="6.9" text-anchor="middle" fill="#1e1e1e">P</text><text transform="translate(1079.95 100.05) scale(1 1.22)" font-size="6.9" text-anchor="middle" fill="#1e1e1e">Q</text><text transform="translate(1130.45 100.05) scale(1 1.22)" font-size="6.9" text-anchor="middle" fill="#1e1e1e">R</text><text transform="translate(1181.80 100.05) scale(1 1.22)" font-size="6.9" text-anchor="middle" fill="#1e1e1e">S</text><text transform="translate(11.40 110.87) scale(1 1.28)" font-size="6.6" text-anchor="middle" fill="#000">1</text><text transform="translate(11.40 121.50) scale(1 1.28)" font-size="6.6" text-anchor="middle" fill="#fff">2</text><text transform="translate(11.40 132.14) scale(1 1.28)" font-size="6.6" text-anchor="middle" fill="#000">3</text><text transform="translate(11.40 142.77) scale(1 1.28)" font-size="6.6" text-anchor="middle" fill="#000">4</text><text transform="translate(11.40 153.40) scale(1 1.28)" font-size="6.6" text-anchor="middle" fill="#000">5</text><text transform="translate(11.40 164.03) scale(1 1.28)" font-size="6.6" text-anchor="middle" fill="#000">6</text><text transform="translate(11.40 174.67) scale(1 1.28)" font-size="6.6" text-anchor="middle" fill="#000">7</text><text transform="translate(11.40 185.30) scale(1 1.28)" font-size="6.6" text-anchor="middle" fill="#000">8</text><text transform="translate(11.40 195.93) scale(1 1.28)" font-size="6.6" text-anchor="middle" fill="#000">9</text><text transform="translate(11.40 206.57) scale(1 1.28)" font-size="6.6" text-anchor="middle" fill="#000">10</text><text transform="translate(11.40 217.20) scale(1 1.28)" font-size="6.6" text-anchor="middle" fill="#000">11</text><text transform="translate(11.40 227.83) scale(1 1.28)" font-size="6.6" text-anchor="middle" fill="#000">12</text><text transform="translate(11.40 238.47) scale(1 1.28)" font-size="6.6" text-anchor="middle" fill="#000">13</text><text transform="translate(11.40 249.10) scale(1 1.28)" font-size="6.6" text-anchor="middle" fill="#000">14</text><text transform="translate(11.40 259.73) scale(1 1.28)" font-size="6.6" text-anchor="middle" fill="#000">15</text><text transform="translate(11.40 270.36) scale(1 1.28)" font-size="6.6" text-anchor="middle" fill="#000">16</text><text transform="translate(11.40 281.00) scale(1 1.28)" font-size="6.6" text-anchor="middle" fill="#000">17</text><text transform="translate(11.40 291.63) scale(1 1.28)" font-size="6.6" text-anchor="middle" fill="#000">18</text><text transform="translate(11.40 302.26) scale(1 1.28)" font-size="6.6" text-anchor="middle" fill="#000">19</text><text transform="translate(11.40 312.90) scale(1 1.28)" font-size="6.6" text-anchor="middle" fill="#000">20</text><text transform="translate(11.40 323.53) scale(1 1.28)" font-size="6.6" text-anchor="middle" fill="#000">21</text><text transform="translate(11.40 334.16) scale(1 1.28)" font-size="6.6" text-anchor="middle" fill="#000">22</text><text transform="translate(11.40 344.80) scale(1 1.28)" font-size="6.6" text-anchor="middle" fill="#000">23</text><text transform="translate(11.40 355.43) scale(1 1.28)" font-size="6.6" text-anchor="middle" fill="#000">24</text><text transform="translate(11.40 366.06) scale(1 1.28)" font-size="6.6" text-anchor="middle" fill="#000">25</text><text transform="translate(11.40 376.69) scale(1 1.28)" font-size="6.6" text-anchor="middle" fill="#000">26</text><text transform="translate(11.40 387.33) scale(1 1.28)" font-size="6.6" text-anchor="middle" fill="#000">27</text><text transform="translate(11.40 397.96) scale(1 1.28)" font-size="6.6" text-anchor="middle" fill="#000">28</text><text transform="translate(11.40 408.59) scale(1 1.28)" font-size="6.6" text-anchor="middle" fill="#000">29</text><text transform="translate(11.40 419.23) scale(1 1.28)" font-size="6.6" text-anchor="middle" fill="#000">30</text><text transform="translate(11.40 429.86) scale(1 1.28)" font-size="6.6" text-anchor="middle" fill="#000">31</text><text transform="translate(11.40 440.49) scale(1 1.28)" font-size="6.6" text-anchor="middle" fill="#000">32</text><text transform="translate(11.40 451.13) scale(1 1.28)" font-size="6.6" text-anchor="middle" fill="#000">33</text><text transform="translate(11.40 461.76) scale(1 1.28)" font-size="6.6" text-anchor="middle" fill="#000">34</text><text transform="translate(11.40 472.39) scale(1 1.28)" font-size="6.6" text-anchor="middle" fill="#000">35</text><text transform="translate(11.40 483.02) scale(1 1.28)" font-size="6.6" text-anchor="middle" fill="#000">36</text><text transform="translate(11.40 493.66) scale(1 1.28)" font-size="6.6" text-anchor="middle" fill="#000">37</text><text transform="translate(11.40 504.29) scale(1 1.28)" font-size="6.6" text-anchor="middle" fill="#000">38</text><text transform="translate(11.40 514.92) scale(1 1.28)" font-size="6.6" text-anchor="middle" fill="#000">39</text><text transform="translate(11.40 525.56) scale(1 1.28)" font-size="6.6" text-anchor="middle" fill="#000">40</text><text transform="translate(11.40 536.19) scale(1 1.28)" font-size="6.6" text-anchor="middle" fill="#000">41</text><text transform="translate(11.40 546.82) scale(1 1.28)" font-size="6.6" text-anchor="middle" fill="#000">42</text><text transform="translate(11.40 557.46) scale(1 1.28)" font-size="6.6" text-anchor="middle" fill="#000">43</text><text transform="translate(11.40 568.09) scale(1 1.28)" font-size="6.6" text-anchor="middle" fill="#000">44</text><text transform="translate(11.40 578.72) scale(1 1.28)" font-size="6.6" text-anchor="middle" fill="#000">45</text><text transform="translate(11.40 589.35) scale(1 1.28)" font-size="6.6" text-anchor="middle" fill="#000">46</text><text transform="translate(11.40 599.99) scale(1 1.28)" font-size="6.6" text-anchor="middle" fill="#000">47</text><text transform="translate(11.40 610.62) scale(1 1.28)" font-size="6.6" text-anchor="middle" fill="#000">48</text><text transform="translate(11.40 621.25) scale(1 1.28)" font-size="6.6" text-anchor="middle" fill="#000">49</text><text transform="translate(11.40 631.89) scale(1 1.28)" font-size="6.6" text-anchor="middle" fill="#000">50</text><text transform="translate(37.00 110.57) scale(1 1.26)" font-size="7.9" text-anchor="middle" fill="#000">Orbit 1</text><text transform="translate(68.30 110.57) scale(1 1.26)" font-size="7.9" text-anchor="middle" fill="#000">Orbit 2</text><text transform="translate(118.85 110.57) scale(1 1.26)" font-size="7.9" text-anchor="middle" fill="#000">Ionization Energy</text><text transform="translate(184.50 110.57) scale(1 1.26)" font-size="7.9" text-anchor="middle" fill="#000">Energy</text><text transform="translate(254.00 110.57) scale(1 1.26)" font-size="7.9" text-anchor="middle" fill="#000">Frequency [Hz]</text><text transform="translate(340.40 110.57) scale(1 1.26)" font-size="7.9" text-anchor="middle" fill="#000">Wavelength [m]</text><text transform="translate(423.75 110.57) scale(1 1.26)" font-size="7.9" text-anchor="middle" fill="#000">Wavelength [nm]</text><text transform="translate(495.85 110.57) scale(1 1.26)" font-size="7.9" text-anchor="middle" fill="#000">Fraction of Energy</text><text transform="translate(580.50 110.57) scale(1 1.26)" font-size="7.9" text-anchor="middle" fill="#000">Momentum</text><text transform="translate(676.35 110.57) scale(1 1.26)" font-size="7.9" text-anchor="middle" fill="#000">Mass</text><text transform="translate(51.50 121.20) scale(1 1.26)" font-size="7.9" text-anchor="end" fill="#000">1</text><text transform="translate(83.30 121.20) scale(1 1.26)" font-size="7.9" text-anchor="end" fill="#000">100000</text><text transform="translate(152.60 121.20) scale(1 1.26)" font-size="7.9" text-anchor="end" fill="#000">13,6</text><text transform="translate(214.60 121.20) scale(1 1.26)" font-size="7.9" text-anchor="end" fill="#000">13,5999999986</text><text transform="translate(291.60 121.20) scale(1 1.26)" font-size="7.9" text-anchor="end" fill="#000">3288465923063920</text><text transform="translate(387.40 121.20) scale(1 1.26)" font-size="7.9" text-anchor="end" fill="#000">9,11648364355493E-008</text><text transform="translate(458.30 121.20) scale(1 1.26)" font-size="7.9" text-anchor="end" fill="#000">91,1648364355</text><text transform="translate(531.60 121.20) scale(1 1.26)" font-size="7.9" text-anchor="end" fill="#000">0,9999999999</text><text transform="translate(627.60 121.20) scale(1 1.26)" font-size="7.9" text-anchor="end" fill="#000">7,26742765417443E-027</text><text transform="translate(723.30 121.20) scale(1 1.26)" font-size="7.9" text-anchor="end" fill="#000">2,42415292988272E-035</text><text transform="translate(800.90 121.20) scale(1 1.26)" font-size="7.9" text-anchor="end" fill="#000">3293686046036310</text><text transform="translate(51.50 131.84) scale(1 1.26)" font-size="7.9" text-anchor="end" fill="#000">1</text><text transform="translate(83.30 131.84) scale(1 1.26)" font-size="7.9" text-anchor="end" fill="#000">10</text><text transform="translate(152.60 131.84) scale(1 1.26)" font-size="7.9" text-anchor="end" fill="#000">13,6</text><text transform="translate(214.60 131.84) scale(1 1.26)" font-size="7.9" text-anchor="end" fill="#000">13,464</text><text transform="translate(291.60 131.84) scale(1 1.26)" font-size="7.9" text-anchor="end" fill="#000">3255581264158840</text><text transform="translate(387.40 131.84) scale(1 1.26)" font-size="7.9" text-anchor="end" fill="#000">9,20856933600331E-008</text><text transform="translate(458.30 131.84) scale(1 1.26)" font-size="7.9" text-anchor="end" fill="#000">92,08569336</text><text transform="translate(531.60 131.84) scale(1 1.26)" font-size="7.9" text-anchor="end" fill="#000">0,99</text><text transform="translate(627.60 131.84) scale(1 1.26)" font-size="7.9" text-anchor="end" fill="#000">7,19475337835217E-027</text><text transform="translate(723.30 131.84) scale(1 1.26)" font-size="7.9" text-anchor="end" fill="#000">2,39991140082389E-035</text><text transform="translate(800.90 131.84) scale(1 1.26)" font-size="7.9" text-anchor="end" fill="#000">3260749185902020</text><text transform="translate(51.50 142.47) scale(1 1.26)" font-size="7.9" text-anchor="end" fill="#000">1</text><text transform="translate(83.30 142.47) scale(1 1.26)" font-size="7.9" text-anchor="end" fill="#000">9</text><text transform="translate(152.60 142.47) scale(1 1.26)" font-size="7.9" text-anchor="end" fill="#000">13,6</text><text transform="translate(214.60 142.47) scale(1 1.26)" font-size="7.9" text-anchor="end" fill="#000">13,4320987654</text><text transform="translate(291.60 142.47) scale(1 1.26)" font-size="7.9" text-anchor="end" fill="#000">3247867578659520</text><text transform="translate(387.40 142.47) scale(1 1.26)" font-size="7.9" text-anchor="end" fill="#000">9,23043968817632E-008</text><text transform="translate(458.30 142.47) scale(1 1.26)" font-size="7.9" text-anchor="end" fill="#000">92,3043968818</text><text transform="translate(531.60 142.47) scale(1 1.26)" font-size="7.9" text-anchor="end" fill="#000">0,987654321</text><text transform="translate(627.60 142.47) scale(1 1.26)" font-size="7.9" text-anchor="end" fill="#000">7,17770632582832E-027</text><text transform="translate(723.30 142.47) scale(1 1.26)" font-size="7.9" text-anchor="end" fill="#000">2,39422511617298E-035</text><text transform="translate(800.90 142.47) scale(1 1.26)" font-size="7.9" text-anchor="end" fill="#000">3253023255669810</text><text transform="translate(51.50 153.10) scale(1 1.26)" font-size="7.9" text-anchor="end" fill="#000">1</text><text transform="translate(83.30 153.10) scale(1 1.26)" font-size="7.9" text-anchor="end" fill="#000">8</text><text transform="translate(152.60 153.10) scale(1 1.26)" font-size="7.9" text-anchor="end" fill="#000">13,6</text><text transform="translate(214.60 153.10) scale(1 1.26)" font-size="7.9" text-anchor="end" fill="#000">13,3875</text><text transform="translate(291.60 153.10) scale(1 1.26)" font-size="7.9" text-anchor="end" fill="#000">3237083643339760</text><text transform="translate(387.40 153.10) scale(1 1.26)" font-size="7.9" text-anchor="end" fill="#000">9,26118973220905E-008</text><text transform="translate(458.30 153.10) scale(1 1.26)" font-size="7.9" text-anchor="end" fill="#000">92,6118973221</text><text transform="translate(531.60 153.10) scale(1 1.26)" font-size="7.9" text-anchor="end" fill="#000">0,984375</text><text transform="translate(627.60 153.10) scale(1 1.26)" font-size="7.9" text-anchor="end" fill="#000">7,15387409779335E-027</text><text transform="translate(723.30 153.10) scale(1 1.26)" font-size="7.9" text-anchor="end" fill="#000">2,38627554059193E-035</text><text transform="translate(800.90 153.10) scale(1 1.26)" font-size="7.9" text-anchor="end" fill="#000">3242222201891210</text><text transform="translate(51.50 163.73) scale(1 1.26)" font-size="7.9" text-anchor="end" fill="#000">1</text><text transform="translate(83.30 163.73) scale(1 1.26)" font-size="7.9" text-anchor="end" fill="#000">7</text><text transform="translate(152.60 163.73) scale(1 1.26)" font-size="7.9" text-anchor="end" fill="#000">13,6</text><text transform="translate(214.60 163.73) scale(1 1.26)" font-size="7.9" text-anchor="end" fill="#000">13,3224489796</text><text transform="translate(291.60 163.73) scale(1 1.26)" font-size="7.9" text-anchor="end" fill="#000">3221354373935770</text><text transform="translate(387.40 163.73) scale(1 1.26)" font-size="7.9" text-anchor="end" fill="#000">9,30641038519835E-008</text><text transform="translate(458.30 163.73) scale(1 1.26)" font-size="7.9" text-anchor="end" fill="#000">93,064103852</text><text transform="translate(531.60 163.73) scale(1 1.26)" font-size="7.9" text-anchor="end" fill="#000">0,9795918367</text><text transform="translate(627.60 163.73) scale(1 1.26)" font-size="7.9" text-anchor="end" fill="#000">7,11911280480115E-027</text><text transform="translate(723.30 163.73) scale(1 1.26)" font-size="7.9" text-anchor="end" fill="#000">2,37468042134708E-035</text><text transform="translate(800.90 163.73) scale(1 1.26)" font-size="7.9" text-anchor="end" fill="#000">3226467963786790</text><text transform="translate(51.50 174.37) scale(1 1.26)" font-size="7.9" text-anchor="end" fill="#000">1</text><text transform="translate(83.30 174.37) scale(1 1.26)" font-size="7.9" text-anchor="end" fill="#000">6</text><text transform="translate(152.60 174.37) scale(1 1.26)" font-size="7.9" text-anchor="end" fill="#000">13,6</text><text transform="translate(214.60 174.37) scale(1 1.26)" font-size="7.9" text-anchor="end" fill="#000">13,2222222222</text><text transform="translate(291.60 174.37) scale(1 1.26)" font-size="7.9" text-anchor="end" fill="#000">3197119647742970</text><text transform="translate(387.40 174.37) scale(1 1.26)" font-size="7.9" text-anchor="end" fill="#000">9,37695460386166E-008</text><text transform="translate(458.30 174.37) scale(1 1.26)" font-size="7.9" text-anchor="end" fill="#000">93,7695460386</text><text transform="translate(531.60 174.37) scale(1 1.26)" font-size="7.9" text-anchor="end" fill="#000">0,9722222222</text><text transform="translate(627.60 174.37) scale(1 1.26)" font-size="7.9" text-anchor="end" fill="#000">7,06555466448726E-027</text><text transform="translate(723.30 174.37) scale(1 1.26)" font-size="7.9" text-anchor="end" fill="#000">2,35681534873277E-035</text><text transform="translate(800.90 174.37) scale(1 1.26)" font-size="7.9" text-anchor="end" fill="#000">3202194767299960</text><text transform="translate(51.50 185.00) scale(1 1.26)" font-size="7.9" text-anchor="end" fill="#000">1</text><text transform="translate(83.30 185.00) scale(1 1.26)" font-size="7.9" text-anchor="end" fill="#000">5</text><text transform="translate(152.60 185.00) scale(1 1.26)" font-size="7.9" text-anchor="end" fill="#000">13,6</text><text transform="translate(214.60 185.00) scale(1 1.26)" font-size="7.9" text-anchor="end" fill="#000">13,056</text><text transform="translate(291.60 185.00) scale(1 1.26)" font-size="7.9" text-anchor="end" fill="#000">3156927286457060</text><text transform="translate(387.40 185.00) scale(1 1.26)" font-size="7.9" text-anchor="end" fill="#000">0,000000095</text><text transform="translate(458.30 185.00) scale(1 1.26)" font-size="7.9" text-anchor="end" fill="#000">94,9633712775</text><text transform="translate(531.60 185.00) scale(1 1.26)" font-size="7.9" text-anchor="end" fill="#000">0,96</text><text transform="translate(627.60 185.00) scale(1 1.26)" font-size="7.9" text-anchor="end" fill="#000">6,97673054870513E-027</text><text transform="translate(723.30 185.00) scale(1 1.26)" font-size="7.9" text-anchor="end" fill="#000">2,32718681292013E-035</text><text transform="translate(800.90 185.00) scale(1 1.26)" font-size="7.9" text-anchor="end" fill="#000">3161938604511050</text><text transform="translate(51.50 195.63) scale(1 1.26)" font-size="7.9" text-anchor="end" fill="#000">1</text><text transform="translate(83.30 195.63) scale(1 1.26)" font-size="7.9" text-anchor="end" fill="#000">4</text><text transform="translate(152.60 195.63) scale(1 1.26)" font-size="7.9" text-anchor="end" fill="#000">13,6</text><text transform="translate(214.60 195.63) scale(1 1.26)" font-size="7.9" text-anchor="end" fill="#000">12,75</text><text transform="translate(291.60 195.63) scale(1 1.26)" font-size="7.9" text-anchor="end" fill="#000">3082936803180720</text><text transform="translate(387.40 195.63) scale(1 1.26)" font-size="7.9" text-anchor="end" fill="#000">9,7242492188195E-008</text><text transform="translate(458.30 195.63) scale(1 1.26)" font-size="7.9" text-anchor="end" fill="#000">97,2424921882</text><text transform="translate(531.60 195.63) scale(1 1.26)" font-size="7.9" text-anchor="end" fill="#000">0,9375</text><text transform="translate(627.60 195.63) scale(1 1.26)" font-size="7.9" text-anchor="end" fill="#000">6,81321342646985E-027</text><text transform="translate(723.30 195.63) scale(1 1.26)" font-size="7.9" text-anchor="end" fill="#000">2,27264337199232E-035</text><text transform="translate(800.90 195.63) scale(1 1.26)" font-size="7.9" text-anchor="end" fill="#000">3087830668467820</text><text transform="translate(51.50 206.27) scale(1 1.26)" font-size="7.9" text-anchor="end" fill="#000">1</text><text transform="translate(83.30 206.27) scale(1 1.26)" font-size="7.9" text-anchor="end" fill="#000">3</text><text transform="translate(152.60 206.27) scale(1 1.26)" font-size="7.9" text-anchor="end" fill="#000">13,6</text><text transform="translate(214.60 206.27) scale(1 1.26)" font-size="7.9" text-anchor="end" fill="#000">12,0888888889</text><text transform="translate(291.60 206.27) scale(1 1.26)" font-size="7.9" text-anchor="end" fill="#000">2923080820793570</text><text transform="translate(387.40 206.27) scale(1 1.26)" font-size="7.9" text-anchor="end" fill="#000">1,02560440979737E-007</text><text transform="translate(458.30 206.27) scale(1 1.26)" font-size="7.9" text-anchor="end" fill="#000">102,5604409797</text><text transform="translate(531.60 206.27) scale(1 1.26)" font-size="7.9" text-anchor="end" fill="#000">0,8888888889</text><text transform="translate(627.60 206.27) scale(1 1.26)" font-size="7.9" text-anchor="end" fill="#000">6,45993569324549E-027</text><text transform="translate(723.30 206.27) scale(1 1.26)" font-size="7.9" text-anchor="end" fill="#000">2,15480260455568E-035</text><text transform="translate(800.90 206.27) scale(1 1.26)" font-size="7.9" text-anchor="end" fill="#000">2927720930102820</text><text transform="translate(51.50 216.90) scale(1 1.26)" font-size="7.9" text-anchor="end" fill="#000">1</text><text transform="translate(83.30 216.90) scale(1 1.26)" font-size="7.9" text-anchor="end" fill="#000">2</text><text transform="translate(152.60 216.90) scale(1 1.26)" font-size="7.9" text-anchor="end" fill="#000">13,6</text><text transform="translate(214.60 216.90) scale(1 1.26)" font-size="7.9" text-anchor="end" fill="#000">10,2</text><text transform="translate(291.60 216.90) scale(1 1.26)" font-size="7.9" text-anchor="end" fill="#000">2466349442544580</text><text transform="translate(387.40 216.90) scale(1 1.26)" font-size="7.9" text-anchor="end" fill="#000">1,21553115235244E-007</text><text transform="translate(458.30 216.90) scale(1 1.26)" font-size="7.9" text-anchor="end" fill="#000">121,5531152352</text><text transform="translate(531.60 216.90) scale(1 1.26)" font-size="7.9" text-anchor="end" fill="#000">0,75</text><text transform="translate(627.60 216.90) scale(1 1.26)" font-size="7.9" text-anchor="end" fill="#000">5,45057074117588E-027</text><text transform="translate(723.30 216.90) scale(1 1.26)" font-size="7.9" text-anchor="end" fill="#000">1,81811469759385E-035</text><text transform="translate(800.90 216.90) scale(1 1.26)" font-size="7.9" text-anchor="end" fill="#000">2470264534774260</text><text transform="translate(51.50 227.53) scale(1 1.26)" font-size="7.9" text-anchor="end" fill="#000">2</text><text transform="translate(83.30 227.53) scale(1 1.26)" font-size="7.9" text-anchor="end" fill="#000">10</text><text transform="translate(152.60 227.53) scale(1 1.26)" font-size="7.9" text-anchor="end" fill="#000">13,6</text><text transform="translate(214.60 227.53) scale(1 1.26)" font-size="7.9" text-anchor="end" fill="#000">3,264</text><text transform="translate(291.60 227.53) scale(1 1.26)" font-size="7.9" text-anchor="end" fill="#000">789231821614264</text><text transform="translate(387.40 227.53) scale(1 1.26)" font-size="7.9" text-anchor="end" fill="#000">3,79853485110137E-007</text><text transform="translate(458.30 227.53) scale(1 1.26)" font-size="7.9" text-anchor="end" fill="#000">379,8534851101</text><text transform="translate(531.60 227.53) scale(1 1.26)" font-size="7.9" text-anchor="end" fill="#000">0,24</text><text transform="translate(627.60 227.53) scale(1 1.26)" font-size="7.9" text-anchor="end" fill="#000">1,74418263717628E-027</text><text transform="translate(723.30 227.53) scale(1 1.26)" font-size="7.9" text-anchor="end" fill="#000">5,81796703230033E-036</text><text transform="translate(800.90 227.53) scale(1 1.26)" font-size="7.9" text-anchor="end" fill="#000">790484651127763</text><text transform="translate(51.50 238.17) scale(1 1.26)" font-size="7.9" text-anchor="end" fill="#000">2</text><text transform="translate(83.30 238.17) scale(1 1.26)" font-size="7.9" text-anchor="end" fill="#000">9</text><text transform="translate(152.60 238.17) scale(1 1.26)" font-size="7.9" text-anchor="end" fill="#000">13,6</text><text transform="translate(214.60 238.17) scale(1 1.26)" font-size="7.9" text-anchor="end" fill="#000">3,2320987654</text><text transform="translate(291.60 238.17) scale(1 1.26)" font-size="7.9" text-anchor="end" fill="#000">781518136114948</text><text transform="translate(387.40 238.17) scale(1 1.26)" font-size="7.9" text-anchor="end" fill="#000">3,83602688339795E-007</text><text transform="translate(458.30 238.17) scale(1 1.26)" font-size="7.9" text-anchor="end" fill="#000">383,6026883398</text><text transform="translate(531.60 238.17) scale(1 1.26)" font-size="7.9" text-anchor="end" fill="#000">0,237654321</text><text transform="translate(627.60 238.17) scale(1 1.26)" font-size="7.9" text-anchor="end" fill="#000">1,72713558465244E-027</text><text transform="translate(723.30 238.17) scale(1 1.26)" font-size="7.9" text-anchor="end" fill="#000">5,76110418579123E-036</text><text transform="translate(800.90 238.17) scale(1 1.26)" font-size="7.9" text-anchor="end" fill="#000">782758720895547</text><text transform="translate(51.50 248.80) scale(1 1.26)" font-size="7.9" text-anchor="end" fill="#000">2</text><text transform="translate(83.30 248.80) scale(1 1.26)" font-size="7.9" text-anchor="end" fill="#000">8</text><text transform="translate(152.60 248.80) scale(1 1.26)" font-size="7.9" text-anchor="end" fill="#000">13,6</text><text transform="translate(214.60 248.80) scale(1 1.26)" font-size="7.9" text-anchor="end" fill="#000">3,1875</text><text transform="translate(291.60 248.80) scale(1 1.26)" font-size="7.9" text-anchor="end" fill="#000">770734200795180</text><text transform="translate(387.40 248.80) scale(1 1.26)" font-size="7.9" text-anchor="end" fill="#000">0,000000389</text><text transform="translate(458.30 248.80) scale(1 1.26)" font-size="7.9" text-anchor="end" fill="#000">388,9699687528</text><text transform="translate(531.60 248.80) scale(1 1.26)" font-size="7.9" text-anchor="end" fill="#000">0,234375</text><text transform="translate(627.60 248.80) scale(1 1.26)" font-size="7.9" text-anchor="end" fill="#000">1,70330335661746E-027</text><text transform="translate(723.30 248.80) scale(1 1.26)" font-size="7.9" text-anchor="end" fill="#000">5,6816084299808E-036</text><text transform="translate(800.90 248.80) scale(1 1.26)" font-size="7.9" text-anchor="end" fill="#000">771957667116956</text><text transform="translate(51.50 259.43) scale(1 1.26)" font-size="7.9" text-anchor="end" fill="#000">2</text><text transform="translate(83.30 259.43) scale(1 1.26)" font-size="7.9" text-anchor="end" fill="#000">7</text><text transform="translate(152.60 259.43) scale(1 1.26)" font-size="7.9" text-anchor="end" fill="#000">13,6</text><text transform="translate(214.60 259.43) scale(1 1.26)" font-size="7.9" text-anchor="end" fill="#000">3,1224489796</text><text transform="translate(291.60 259.43) scale(1 1.26)" font-size="7.9" text-anchor="end" fill="#000">755004931391197</text><text transform="translate(387.40 259.43) scale(1 1.26)" font-size="7.9" text-anchor="end" fill="#000">3,97073509768463E-007</text><text transform="translate(458.30 259.43) scale(1 1.26)" font-size="7.9" text-anchor="end" fill="#000">397,0735097685</text><text transform="translate(531.60 259.43) scale(1 1.26)" font-size="7.9" text-anchor="end" fill="#000">0,2295918367</text><text transform="translate(627.60 259.43) scale(1 1.26)" font-size="7.9" text-anchor="end" fill="#000">1,66854206362527E-027</text><text transform="translate(723.30 259.43) scale(1 1.26)" font-size="7.9" text-anchor="end" fill="#000">5,56565723753221E-036</text><text transform="translate(800.90 259.43) scale(1 1.26)" font-size="7.9" text-anchor="end" fill="#000">756203429012528</text><text transform="translate(51.50 270.06) scale(1 1.26)" font-size="7.9" text-anchor="end" fill="#000">2</text><text transform="translate(83.30 270.06) scale(1 1.26)" font-size="7.9" text-anchor="end" fill="#000">6</text><text transform="translate(152.60 270.06) scale(1 1.26)" font-size="7.9" text-anchor="end" fill="#000">13,6</text><text transform="translate(214.60 270.06) scale(1 1.26)" font-size="7.9" text-anchor="end" fill="#000">3,0222222222</text><text transform="translate(291.60 270.06) scale(1 1.26)" font-size="7.9" text-anchor="end" fill="#000">730770205198393</text><text transform="translate(387.40 270.06) scale(1 1.26)" font-size="7.9" text-anchor="end" fill="#000">4,10241763918948E-007</text><text transform="translate(458.30 270.06) scale(1 1.26)" font-size="7.9" text-anchor="end" fill="#000">410,2417639189</text><text transform="translate(531.60 270.06) scale(1 1.26)" font-size="7.9" text-anchor="end" fill="#000">0,2222222222</text><text transform="translate(627.60 270.06) scale(1 1.26)" font-size="7.9" text-anchor="end" fill="#000">1,61498392331137E-027</text><text transform="translate(723.30 270.06) scale(1 1.26)" font-size="7.9" text-anchor="end" fill="#000">5,3870065113892E-036</text><text transform="translate(800.90 270.06) scale(1 1.26)" font-size="7.9" text-anchor="end" fill="#000">731930232525706</text><text transform="translate(51.50 280.70) scale(1 1.26)" font-size="7.9" text-anchor="end" fill="#000">2</text><text transform="translate(83.30 280.70) scale(1 1.26)" font-size="7.9" text-anchor="end" fill="#000">5</text><text transform="translate(152.60 280.70) scale(1 1.26)" font-size="7.9" text-anchor="end" fill="#000">13,6</text><text transform="translate(214.60 280.70) scale(1 1.26)" font-size="7.9" text-anchor="end" fill="#000">2,856</text><text transform="translate(291.60 280.70) scale(1 1.26)" font-size="7.9" text-anchor="end" fill="#000">690577843912481</text><text transform="translate(387.40 280.70) scale(1 1.26)" font-size="7.9" text-anchor="end" fill="#000">4,34118268697299E-007</text><text transform="translate(458.30 280.70) scale(1 1.26)" font-size="7.9" text-anchor="end" fill="#000">434,1182686973</text><text transform="translate(531.60 280.70) scale(1 1.26)" font-size="7.9" text-anchor="end" fill="#000">0,21</text><text transform="translate(627.60 280.70) scale(1 1.26)" font-size="7.9" text-anchor="end" fill="#000">1,52615980752925E-027</text><text transform="translate(723.30 280.70) scale(1 1.26)" font-size="7.9" text-anchor="end" fill="#000">5,09072115326279E-036</text><text transform="translate(800.90 280.70) scale(1 1.26)" font-size="7.9" text-anchor="end" fill="#000">691674069736793</text><text transform="translate(51.50 291.33) scale(1 1.26)" font-size="7.9" text-anchor="end" fill="#000">2</text><text transform="translate(83.30 291.33) scale(1 1.26)" font-size="7.9" text-anchor="end" fill="#000">4</text><text transform="translate(152.60 291.33) scale(1 1.26)" font-size="7.9" text-anchor="end" fill="#000">13,6</text><text transform="translate(214.60 291.33) scale(1 1.26)" font-size="7.9" text-anchor="end" fill="#000">2,55</text><text transform="translate(291.60 291.33) scale(1 1.26)" font-size="7.9" text-anchor="end" fill="#000">616587360636144</text><text transform="translate(387.40 291.33) scale(1 1.26)" font-size="7.9" text-anchor="end" fill="#000">4,86212460940975E-007</text><text transform="translate(458.30 291.33) scale(1 1.26)" font-size="7.9" text-anchor="end" fill="#000">486,212460941</text><text transform="translate(531.60 291.33) scale(1 1.26)" font-size="7.9" text-anchor="end" fill="#000">0,1875</text><text transform="translate(627.60 291.33) scale(1 1.26)" font-size="7.9" text-anchor="end" fill="#000">1,36264268529397E-027</text><text transform="translate(723.30 291.33) scale(1 1.26)" font-size="7.9" text-anchor="end" fill="#000">4,54528674398464E-036</text><text transform="translate(800.90 291.33) scale(1 1.26)" font-size="7.9" text-anchor="end" fill="#000">617566133693565</text><text transform="translate(51.50 301.96) scale(1 1.26)" font-size="7.9" text-anchor="end" fill="#000">2</text><text transform="translate(83.30 301.96) scale(1 1.26)" font-size="7.9" text-anchor="end" fill="#000">3</text><text transform="translate(152.60 301.96) scale(1 1.26)" font-size="7.9" text-anchor="end" fill="#000">13,6</text><text transform="translate(214.60 301.96) scale(1 1.26)" font-size="7.9" text-anchor="end" fill="#000">1,8888888889</text><text transform="translate(291.60 301.96) scale(1 1.26)" font-size="7.9" text-anchor="end" fill="#000">456731378248996</text><text transform="translate(387.40 301.96) scale(1 1.26)" font-size="7.9" text-anchor="end" fill="#000">6,56386822270316E-007</text><text transform="translate(458.30 301.96) scale(1 1.26)" font-size="7.9" text-anchor="end" fill="#000">656,3868222703</text><text transform="translate(531.60 301.96) scale(1 1.26)" font-size="7.9" text-anchor="end" fill="#000">0,1388888889</text><text transform="translate(627.60 301.96) scale(1 1.26)" font-size="7.9" text-anchor="end" fill="#000">1,00936495206961E-027</text><text transform="translate(723.30 301.96) scale(1 1.26)" font-size="7.9" text-anchor="end" fill="#000">3,36687906961825E-036</text><text transform="translate(800.90 301.96) scale(1 1.26)" font-size="7.9" text-anchor="end" fill="#000">457456395328566</text><text transform="translate(51.50 312.60) scale(1 1.26)" font-size="7.9" text-anchor="end" fill="#000">3</text><text transform="translate(83.30 312.60) scale(1 1.26)" font-size="7.9" text-anchor="end" fill="#000">10</text><text transform="translate(152.60 312.60) scale(1 1.26)" font-size="7.9" text-anchor="end" fill="#000">13,6</text><text transform="translate(214.60 312.60) scale(1 1.26)" font-size="7.9" text-anchor="end" fill="#000">1,3751111111</text><text transform="translate(291.60 312.60) scale(1 1.26)" font-size="7.9" text-anchor="end" fill="#000">332500443365269</text><text transform="translate(387.40 312.60) scale(1 1.26)" font-size="7.9" text-anchor="end" fill="#000">9,01630250371314E-007</text><text transform="translate(458.30 312.60) scale(1 1.26)" font-size="7.9" text-anchor="end" fill="#000">901,6302503713</text><text transform="translate(531.60 312.60) scale(1 1.26)" font-size="7.9" text-anchor="end" fill="#000">0,1011111111</text><text transform="translate(627.60 312.60) scale(1 1.26)" font-size="7.9" text-anchor="end" fill="#000">7,34817685106675E-028</text><text transform="translate(723.30 312.60) scale(1 1.26)" font-size="7.9" text-anchor="end" fill="#000">2,45108796268208E-036</text><text transform="translate(800.90 312.60) scale(1 1.26)" font-size="7.9" text-anchor="end" fill="#000">333028255799196</text><text transform="translate(51.50 323.23) scale(1 1.26)" font-size="7.9" text-anchor="end" fill="#000">3</text><text transform="translate(83.30 323.23) scale(1 1.26)" font-size="7.9" text-anchor="end" fill="#000">9</text><text transform="translate(152.60 323.23) scale(1 1.26)" font-size="7.9" text-anchor="end" fill="#000">13,6</text><text transform="translate(214.60 323.23) scale(1 1.26)" font-size="7.9" text-anchor="end" fill="#000">1,3432098765</text><text transform="translate(291.60 323.23) scale(1 1.26)" font-size="7.9" text-anchor="end" fill="#000">324786757865952</text><text transform="translate(387.40 323.23) scale(1 1.26)" font-size="7.9" text-anchor="end" fill="#000">0,000000923</text><text transform="translate(458.30 323.23) scale(1 1.26)" font-size="7.9" text-anchor="end" fill="#000">923,0439688176</text><text transform="translate(531.60 323.23) scale(1 1.26)" font-size="7.9" text-anchor="end" fill="#000">0,0987654321</text><text transform="translate(627.60 323.23) scale(1 1.26)" font-size="7.9" text-anchor="end" fill="#000">7,17770632582832E-028</text><text transform="translate(723.30 323.23) scale(1 1.26)" font-size="7.9" text-anchor="end" fill="#000">2,39422511617298E-036</text><text transform="translate(800.90 323.23) scale(1 1.26)" font-size="7.9" text-anchor="end" fill="#000">325302325566981</text><text transform="translate(51.50 333.86) scale(1 1.26)" font-size="7.9" text-anchor="end" fill="#000">3</text><text transform="translate(83.30 333.86) scale(1 1.26)" font-size="7.9" text-anchor="end" fill="#000">8</text><text transform="translate(152.60 333.86) scale(1 1.26)" font-size="7.9" text-anchor="end" fill="#000">13,6</text><text transform="translate(214.60 333.86) scale(1 1.26)" font-size="7.9" text-anchor="end" fill="#000">1,2986111111</text><text transform="translate(291.60 333.86) scale(1 1.26)" font-size="7.9" text-anchor="end" fill="#000">314002822546184</text><text transform="translate(387.40 333.86) scale(1 1.26)" font-size="7.9" text-anchor="end" fill="#000">9,54744468756823E-007</text><text transform="translate(458.30 333.86) scale(1 1.26)" font-size="7.9" text-anchor="end" fill="#000">954,7444687568</text><text transform="translate(531.60 333.86) scale(1 1.26)" font-size="7.9" text-anchor="end" fill="#000">0,0954861111</text><text transform="translate(627.60 333.86) scale(1 1.26)" font-size="7.9" text-anchor="end" fill="#000">6,93938404547856E-028</text><text transform="translate(723.30 333.86) scale(1 1.26)" font-size="7.9" text-anchor="end" fill="#000">2,31472936036255E-036</text><text transform="translate(800.90 333.86) scale(1 1.26)" font-size="7.9" text-anchor="end" fill="#000">314501271788389</text><text transform="translate(51.50 344.50) scale(1 1.26)" font-size="7.9" text-anchor="end" fill="#000">3</text><text transform="translate(83.30 344.50) scale(1 1.26)" font-size="7.9" text-anchor="end" fill="#000">7</text><text transform="translate(152.60 344.50) scale(1 1.26)" font-size="7.9" text-anchor="end" fill="#000">13,6</text><text transform="translate(214.60 344.50) scale(1 1.26)" font-size="7.9" text-anchor="end" fill="#000">1,2335600907</text><text transform="translate(291.60 344.50) scale(1 1.26)" font-size="7.9" text-anchor="end" fill="#000">298273553142201</text><text transform="translate(387.40 344.50) scale(1 1.26)" font-size="7.9" text-anchor="end" fill="#000">1,00509232160142E-006</text><text transform="translate(458.30 344.50) scale(1 1.26)" font-size="7.9" text-anchor="end" fill="#000">1005,0923216014</text><text transform="translate(531.60 344.50) scale(1 1.26)" font-size="7.9" text-anchor="end" fill="#000">0,0907029478</text><text transform="translate(627.60 344.50) scale(1 1.26)" font-size="7.9" text-anchor="end" fill="#000">6,59177111555662E-028</text><text transform="translate(723.30 344.50) scale(1 1.26)" font-size="7.9" text-anchor="end" fill="#000">2,19877816791396E-036</text><text transform="translate(800.90 344.50) scale(1 1.26)" font-size="7.9" text-anchor="end" fill="#000">298747033683962</text><text transform="translate(51.50 355.13) scale(1 1.26)" font-size="7.9" text-anchor="end" fill="#000">3</text><text transform="translate(83.30 355.13) scale(1 1.26)" font-size="7.9" text-anchor="end" fill="#000">6</text><text transform="translate(152.60 355.13) scale(1 1.26)" font-size="7.9" text-anchor="end" fill="#000">13,6</text><text transform="translate(214.60 355.13) scale(1 1.26)" font-size="7.9" text-anchor="end" fill="#000">1,1333333333</text><text transform="translate(291.60 355.13) scale(1 1.26)" font-size="7.9" text-anchor="end" fill="#000">274038826949397</text><text transform="translate(387.40 355.13) scale(1 1.26)" font-size="7.9" text-anchor="end" fill="#000">0,000001094</text><text transform="translate(458.30 355.13) scale(1 1.26)" font-size="7.9" text-anchor="end" fill="#000">1093,9780371172</text><text transform="translate(531.60 355.13) scale(1 1.26)" font-size="7.9" text-anchor="end" fill="#000">0,0833333333</text><text transform="translate(627.60 355.13) scale(1 1.26)" font-size="7.9" text-anchor="end" fill="#000">6,05618971241765E-028</text><text transform="translate(723.30 355.13) scale(1 1.26)" font-size="7.9" text-anchor="end" fill="#000">2,02012744177095E-036</text><text transform="translate(800.90 355.13) scale(1 1.26)" font-size="7.9" text-anchor="end" fill="#000">274473837197140</text><text transform="translate(51.50 365.76) scale(1 1.26)" font-size="7.9" text-anchor="end" fill="#000">3</text><text transform="translate(83.30 365.76) scale(1 1.26)" font-size="7.9" text-anchor="end" fill="#000">5</text><text transform="translate(152.60 365.76) scale(1 1.26)" font-size="7.9" text-anchor="end" fill="#000">13,6</text><text transform="translate(214.60 365.76) scale(1 1.26)" font-size="7.9" text-anchor="end" fill="#000">0,9671111111</text><text transform="translate(291.60 365.76) scale(1 1.26)" font-size="7.9" text-anchor="end" fill="#000">233846465663486</text><text transform="translate(387.40 365.76) scale(1 1.26)" font-size="7.9" text-anchor="end" fill="#000">0,000001282</text><text transform="translate(458.30 365.76) scale(1 1.26)" font-size="7.9" text-anchor="end" fill="#000">1282,0055122467</text><text transform="translate(531.60 365.76) scale(1 1.26)" font-size="7.9" text-anchor="end" fill="#000">0,0711111111</text><text transform="translate(627.60 365.76) scale(1 1.26)" font-size="7.9" text-anchor="end" fill="#000">5,16794855459639E-028</text><text transform="translate(723.30 365.76) scale(1 1.26)" font-size="7.9" text-anchor="end" fill="#000">1,72384208364454E-036</text><text transform="translate(800.90 365.76) scale(1 1.26)" font-size="7.9" text-anchor="end" fill="#000">234217674408226</text><text transform="translate(51.50 376.39) scale(1 1.26)" font-size="7.9" text-anchor="end" fill="#000">4</text><text transform="translate(83.30 376.39) scale(1 1.26)" font-size="7.9" text-anchor="end" fill="#000">10</text><text transform="translate(152.60 376.39) scale(1 1.26)" font-size="7.9" text-anchor="end" fill="#000">13,6</text><text transform="translate(214.60 376.39) scale(1 1.26)" font-size="7.9" text-anchor="end" fill="#000">0,714</text><text transform="translate(291.60 376.39) scale(1 1.26)" font-size="7.9" text-anchor="end" fill="#000">172644460978120</text><text transform="translate(387.40 376.39) scale(1 1.26)" font-size="7.9" text-anchor="end" fill="#000">1,7364730747892E-006</text><text transform="translate(458.30 376.39) scale(1 1.26)" font-size="7.9" text-anchor="end" fill="#000">1736,4730747892</text><text transform="translate(531.60 376.39) scale(1 1.26)" font-size="7.9" text-anchor="end" fill="#000">0,0525</text><text transform="translate(627.60 376.39) scale(1 1.26)" font-size="7.9" text-anchor="end" fill="#000">3,81539951882312E-028</text><text transform="translate(723.30 376.39) scale(1 1.26)" font-size="7.9" text-anchor="end" fill="#000">1,2726802883157E-036</text><text transform="translate(800.90 376.39) scale(1 1.26)" font-size="7.9" text-anchor="end" fill="#000">172918517434198</text><text transform="translate(51.50 387.03) scale(1 1.26)" font-size="7.9" text-anchor="end" fill="#000">4</text><text transform="translate(83.30 387.03) scale(1 1.26)" font-size="7.9" text-anchor="end" fill="#000">9</text><text transform="translate(152.60 387.03) scale(1 1.26)" font-size="7.9" text-anchor="end" fill="#000">13,6</text><text transform="translate(214.60 387.03) scale(1 1.26)" font-size="7.9" text-anchor="end" fill="#000">0,6820987654</text><text transform="translate(291.60 387.03) scale(1 1.26)" font-size="7.9" text-anchor="end" fill="#000">164930775478804</text><text transform="translate(387.40 387.03) scale(1 1.26)" font-size="7.9" text-anchor="end" fill="#000">1,81768658474857E-006</text><text transform="translate(458.30 387.03) scale(1 1.26)" font-size="7.9" text-anchor="end" fill="#000">1817,6865847486</text><text transform="translate(531.60 387.03) scale(1 1.26)" font-size="7.9" text-anchor="end" fill="#000">0,050154321</text><text transform="translate(627.60 387.03) scale(1 1.26)" font-size="7.9" text-anchor="end" fill="#000">3,6449289935847E-028</text><text transform="translate(723.30 387.03) scale(1 1.26)" font-size="7.9" text-anchor="end" fill="#000">1,21581744180659E-036</text><text transform="translate(800.90 387.03) scale(1 1.26)" font-size="7.9" text-anchor="end" fill="#000">165192587201982</text><text transform="translate(51.50 397.66) scale(1 1.26)" font-size="7.9" text-anchor="end" fill="#000">3</text><text transform="translate(83.30 397.66) scale(1 1.26)" font-size="7.9" text-anchor="end" fill="#000">4</text><text transform="translate(152.60 397.66) scale(1 1.26)" font-size="7.9" text-anchor="end" fill="#000">13,6</text><text transform="translate(214.60 397.66) scale(1 1.26)" font-size="7.9" text-anchor="end" fill="#000">0,6611111111</text><text transform="translate(291.60 397.66) scale(1 1.26)" font-size="7.9" text-anchor="end" fill="#000">159855982387148</text><text transform="translate(387.40 397.66) scale(1 1.26)" font-size="7.9" text-anchor="end" fill="#000">1,87539092077233E-006</text><text transform="translate(458.30 397.66) scale(1 1.26)" font-size="7.9" text-anchor="end" fill="#000">1875,3909207723</text><text transform="translate(531.60 397.66) scale(1 1.26)" font-size="7.9" text-anchor="end" fill="#000">0,0486111111</text><text transform="translate(627.60 397.66) scale(1 1.26)" font-size="7.9" text-anchor="end" fill="#000">3,53277733224363E-028</text><text transform="translate(723.30 397.66) scale(1 1.26)" font-size="7.9" text-anchor="end" fill="#000">1,17840767436639E-036</text><text transform="translate(800.90 397.66) scale(1 1.26)" font-size="7.9" text-anchor="end" fill="#000">160109738364998</text><text transform="translate(51.50 408.29) scale(1 1.26)" font-size="7.9" text-anchor="end" fill="#000">4</text><text transform="translate(83.30 408.29) scale(1 1.26)" font-size="7.9" text-anchor="end" fill="#000">8</text><text transform="translate(152.60 408.29) scale(1 1.26)" font-size="7.9" text-anchor="end" fill="#000">13,6</text><text transform="translate(214.60 408.29) scale(1 1.26)" font-size="7.9" text-anchor="end" fill="#000">0,6375</text><text transform="translate(291.60 408.29) scale(1 1.26)" font-size="7.9" text-anchor="end" fill="#000">154146840159036</text><text transform="translate(387.40 408.29) scale(1 1.26)" font-size="7.9" text-anchor="end" fill="#000">1,9448498437639E-006</text><text transform="translate(458.30 408.29) scale(1 1.26)" font-size="7.9" text-anchor="end" fill="#000">1944,8498437639</text><text transform="translate(531.60 408.29) scale(1 1.26)" font-size="7.9" text-anchor="end" fill="#000">0,046875</text><text transform="translate(627.60 408.29) scale(1 1.26)" font-size="7.9" text-anchor="end" fill="#000">3,40660671323493E-028</text><text transform="translate(723.30 408.29) scale(1 1.26)" font-size="7.9" text-anchor="end" fill="#000">1,13632168599616E-036</text><text transform="translate(800.90 408.29) scale(1 1.26)" font-size="7.9" text-anchor="end" fill="#000">154391533423391</text><text transform="translate(51.50 418.93) scale(1 1.26)" font-size="7.9" text-anchor="end" fill="#000">4</text><text transform="translate(83.30 418.93) scale(1 1.26)" font-size="7.9" text-anchor="end" fill="#000">7</text><text transform="translate(152.60 418.93) scale(1 1.26)" font-size="7.9" text-anchor="end" fill="#000">13,6</text><text transform="translate(214.60 418.93) scale(1 1.26)" font-size="7.9" text-anchor="end" fill="#000">0,5724489796</text><text transform="translate(291.60 418.93) scale(1 1.26)" font-size="7.9" text-anchor="end" fill="#000">138417570755053</text><text transform="translate(387.40 418.93) scale(1 1.26)" font-size="7.9" text-anchor="end" fill="#000">2,16585550782798E-006</text><text transform="translate(458.30 418.93) scale(1 1.26)" font-size="7.9" text-anchor="end" fill="#000">2165,855507828</text><text transform="translate(531.60 418.93) scale(1 1.26)" font-size="7.9" text-anchor="end" fill="#000">0,0420918367</text><text transform="translate(627.60 418.93) scale(1 1.26)" font-size="7.9" text-anchor="end" fill="#000">3,058993783313E-028</text><text transform="translate(723.30 418.93) scale(1 1.26)" font-size="7.9" text-anchor="end" fill="#000">1,02037049354757E-036</text><text transform="translate(800.90 418.93) scale(1 1.26)" font-size="7.9" text-anchor="end" fill="#000">138637295318964</text><text transform="translate(51.50 429.56) scale(1 1.26)" font-size="7.9" text-anchor="end" fill="#000">4</text><text transform="translate(83.30 429.56) scale(1 1.26)" font-size="7.9" text-anchor="end" fill="#000">6</text><text transform="translate(152.60 429.56) scale(1 1.26)" font-size="7.9" text-anchor="end" fill="#000">13,6</text><text transform="translate(214.60 429.56) scale(1 1.26)" font-size="7.9" text-anchor="end" fill="#000">0,4722222222</text><text transform="translate(291.60 429.56) scale(1 1.26)" font-size="7.9" text-anchor="end" fill="#000">114182844562249</text><text transform="translate(387.40 429.56) scale(1 1.26)" font-size="7.9" text-anchor="end" fill="#000">2,62554728908126E-006</text><text transform="translate(458.30 429.56) scale(1 1.26)" font-size="7.9" text-anchor="end" fill="#000">2625,5472890813</text><text transform="translate(531.60 429.56) scale(1 1.26)" font-size="7.9" text-anchor="end" fill="#000">0,0347222222</text><text transform="translate(627.60 429.56) scale(1 1.26)" font-size="7.9" text-anchor="end" fill="#000">2,52341238017402E-028</text><text transform="translate(723.30 429.56) scale(1 1.26)" font-size="7.9" text-anchor="end" fill="#000">8,41719767404562E-037</text><text transform="translate(800.90 429.56) scale(1 1.26)" font-size="7.9" text-anchor="end" fill="#000">114364098832142</text><text transform="translate(51.50 440.19) scale(1 1.26)" font-size="7.9" text-anchor="end" fill="#000">5</text><text transform="translate(83.30 440.19) scale(1 1.26)" font-size="7.9" text-anchor="end" fill="#000">10</text><text transform="translate(152.60 440.19) scale(1 1.26)" font-size="7.9" text-anchor="end" fill="#000">13,6</text><text transform="translate(214.60 440.19) scale(1 1.26)" font-size="7.9" text-anchor="end" fill="#000">0,408</text><text transform="translate(291.60 440.19) scale(1 1.26)" font-size="7.9" text-anchor="end" fill="#000">98653977701783,1</text><text transform="translate(387.40 440.19) scale(1 1.26)" font-size="7.9" text-anchor="end" fill="#000">3,03882788088109E-006</text><text transform="translate(458.30 440.19) scale(1 1.26)" font-size="7.9" text-anchor="end" fill="#000">3038,8278808811</text><text transform="translate(531.60 440.19) scale(1 1.26)" font-size="7.9" text-anchor="end" fill="#000">0,03</text><text transform="translate(627.60 440.19) scale(1 1.26)" font-size="7.9" text-anchor="end" fill="#000">2,18022829647035E-028</text><text transform="translate(723.30 440.19) scale(1 1.26)" font-size="7.9" text-anchor="end" fill="#000">7,27245879037542E-037</text><text transform="translate(800.90 440.19) scale(1 1.26)" font-size="7.9" text-anchor="end" fill="#000">98810581390970,3</text><text transform="translate(51.50 450.83) scale(1 1.26)" font-size="7.9" text-anchor="end" fill="#000">5</text><text transform="translate(83.30 450.83) scale(1 1.26)" font-size="7.9" text-anchor="end" fill="#000">9</text><text transform="translate(152.60 450.83) scale(1 1.26)" font-size="7.9" text-anchor="end" fill="#000">13,6</text><text transform="translate(214.60 450.83) scale(1 1.26)" font-size="7.9" text-anchor="end" fill="#000">0,3760987654</text><text transform="translate(291.60 450.83) scale(1 1.26)" font-size="7.9" text-anchor="end" fill="#000">90940292202466,7</text><text transform="translate(387.40 450.83) scale(1 1.26)" font-size="7.9" text-anchor="end" fill="#000">3,29658560292011E-006</text><text transform="translate(458.30 450.83) scale(1 1.26)" font-size="7.9" text-anchor="end" fill="#000">3296,5856029201</text><text transform="translate(531.60 450.83) scale(1 1.26)" font-size="7.9" text-anchor="end" fill="#000">0,027654321</text><text transform="translate(627.60 450.83) scale(1 1.26)" font-size="7.9" text-anchor="end" fill="#000">2,00975777123193E-028</text><text transform="translate(723.30 450.83) scale(1 1.26)" font-size="7.9" text-anchor="end" fill="#000">6,70383032528434E-037</text><text transform="translate(800.90 450.83) scale(1 1.26)" font-size="7.9" text-anchor="end" fill="#000">91084651158754,6</text><text transform="translate(51.50 461.46) scale(1 1.26)" font-size="7.9" text-anchor="end" fill="#000">5</text><text transform="translate(83.30 461.46) scale(1 1.26)" font-size="7.9" text-anchor="end" fill="#000">8</text><text transform="translate(152.60 461.46) scale(1 1.26)" font-size="7.9" text-anchor="end" fill="#000">13,6</text><text transform="translate(214.60 461.46) scale(1 1.26)" font-size="7.9" text-anchor="end" fill="#000">0,3315</text><text transform="translate(291.60 461.46) scale(1 1.26)" font-size="7.9" text-anchor="end" fill="#000">80156356882698,7</text><text transform="translate(387.40 461.46) scale(1 1.26)" font-size="7.9" text-anchor="end" fill="#000">3,74009585339211E-006</text><text transform="translate(458.30 461.46) scale(1 1.26)" font-size="7.9" text-anchor="end" fill="#000">3740,0958533921</text><text transform="translate(531.60 461.46) scale(1 1.26)" font-size="7.9" text-anchor="end" fill="#000">0,024375</text><text transform="translate(627.60 461.46) scale(1 1.26)" font-size="7.9" text-anchor="end" fill="#000">1,77143549088216E-028</text><text transform="translate(723.30 461.46) scale(1 1.26)" font-size="7.9" text-anchor="end" fill="#000">5,90887276718003E-037</text><text transform="translate(800.90 461.46) scale(1 1.26)" font-size="7.9" text-anchor="end" fill="#000">80283597380163,4</text><text transform="translate(51.50 472.09) scale(1 1.26)" font-size="7.9" text-anchor="end" fill="#000">4</text><text transform="translate(83.30 472.09) scale(1 1.26)" font-size="7.9" text-anchor="end" fill="#000">5</text><text transform="translate(152.60 472.09) scale(1 1.26)" font-size="7.9" text-anchor="end" fill="#000">13,6</text><text transform="translate(214.60 472.09) scale(1 1.26)" font-size="7.9" text-anchor="end" fill="#000">0,306</text><text transform="translate(291.60 472.09) scale(1 1.26)" font-size="7.9" text-anchor="end" fill="#000">73990483276337,3</text><text transform="translate(387.40 472.09) scale(1 1.26)" font-size="7.9" text-anchor="end" fill="#000">4,05177050784146E-006</text><text transform="translate(458.30 472.09) scale(1 1.26)" font-size="7.9" text-anchor="end" fill="#000">4051,7705078415</text><text transform="translate(531.60 472.09) scale(1 1.26)" font-size="7.9" text-anchor="end" fill="#000">0,0225</text><text transform="translate(627.60 472.09) scale(1 1.26)" font-size="7.9" text-anchor="end" fill="#000">1,63517122235276E-028</text><text transform="translate(723.30 472.09) scale(1 1.26)" font-size="7.9" text-anchor="end" fill="#000">5,45434409278156E-037</text><text transform="translate(800.90 472.09) scale(1 1.26)" font-size="7.9" text-anchor="end" fill="#000">74107936043227,8</text><text transform="translate(51.50 482.73) scale(1 1.26)" font-size="7.9" text-anchor="end" fill="#000">5</text><text transform="translate(83.30 482.73) scale(1 1.26)" font-size="7.9" text-anchor="end" fill="#000">7</text><text transform="translate(152.60 482.73) scale(1 1.26)" font-size="7.9" text-anchor="end" fill="#000">13,6</text><text transform="translate(214.60 482.73) scale(1 1.26)" font-size="7.9" text-anchor="end" fill="#000">0,2664489796</text><text transform="translate(291.60 482.73) scale(1 1.26)" font-size="7.9" text-anchor="end" fill="#000">64427087478715,5</text><text transform="translate(387.40 482.73) scale(1 1.26)" font-size="7.9" text-anchor="end" fill="#000">4,65320519259917E-006</text><text transform="translate(458.30 482.73) scale(1 1.26)" font-size="7.9" text-anchor="end" fill="#000">4653,2051925992</text><text transform="translate(531.60 482.73) scale(1 1.26)" font-size="7.9" text-anchor="end" fill="#000">0,0195918367</text><text transform="translate(627.60 482.73) scale(1 1.26)" font-size="7.9" text-anchor="end" fill="#000">1,42382256096023E-028</text><text transform="translate(723.30 482.73) scale(1 1.26)" font-size="7.9" text-anchor="end" fill="#000">4,74936084269415E-037</text><text transform="translate(800.90 482.73) scale(1 1.26)" font-size="7.9" text-anchor="end" fill="#000">64529359275735,8</text><text transform="translate(51.50 493.36) scale(1 1.26)" font-size="7.9" text-anchor="end" fill="#000">6</text><text transform="translate(83.30 493.36) scale(1 1.26)" font-size="7.9" text-anchor="end" fill="#000">10</text><text transform="translate(152.60 493.36) scale(1 1.26)" font-size="7.9" text-anchor="end" fill="#000">13,6</text><text transform="translate(214.60 493.36) scale(1 1.26)" font-size="7.9" text-anchor="end" fill="#000">0,2417777778</text><text transform="translate(291.60 493.36) scale(1 1.26)" font-size="7.9" text-anchor="end" fill="#000">58461616415871,4</text><text transform="translate(387.40 493.36) scale(1 1.26)" font-size="7.9" text-anchor="end" fill="#000">0,000005128</text><text transform="translate(458.30 493.36) scale(1 1.26)" font-size="7.9" text-anchor="end" fill="#000">5128,0220489869</text><text transform="translate(531.60 493.36) scale(1 1.26)" font-size="7.9" text-anchor="end" fill="#000">0,0177777778</text><text transform="translate(627.60 493.36) scale(1 1.26)" font-size="7.9" text-anchor="end" fill="#000">1,2919871386491E-028</text><text transform="translate(723.30 493.36) scale(1 1.26)" font-size="7.9" text-anchor="end" fill="#000">4,30960520911136E-037</text><text transform="translate(800.90 493.36) scale(1 1.26)" font-size="7.9" text-anchor="end" fill="#000">58554418602056,5</text><text transform="translate(51.50 503.99) scale(1 1.26)" font-size="7.9" text-anchor="end" fill="#000">6</text><text transform="translate(83.30 503.99) scale(1 1.26)" font-size="7.9" text-anchor="end" fill="#000">9</text><text transform="translate(152.60 503.99) scale(1 1.26)" font-size="7.9" text-anchor="end" fill="#000">13,6</text><text transform="translate(214.60 503.99) scale(1 1.26)" font-size="7.9" text-anchor="end" fill="#000">0,2098765432</text><text transform="translate(291.60 503.99) scale(1 1.26)" font-size="7.9" text-anchor="end" fill="#000">50747930916555,1</text><text transform="translate(387.40 503.99) scale(1 1.26)" font-size="7.9" text-anchor="end" fill="#000">5,90748140043285E-006</text><text transform="translate(458.30 503.99) scale(1 1.26)" font-size="7.9" text-anchor="end" fill="#000">5907,4814004329</text><text transform="translate(531.60 503.99) scale(1 1.26)" font-size="7.9" text-anchor="end" fill="#000">0,0154320988</text><text transform="translate(627.60 503.99) scale(1 1.26)" font-size="7.9" text-anchor="end" fill="#000">1,12151661341068E-028</text><text transform="translate(723.30 503.99) scale(1 1.26)" font-size="7.9" text-anchor="end" fill="#000">3,74097674402028E-037</text><text transform="translate(800.90 503.99) scale(1 1.26)" font-size="7.9" text-anchor="end" fill="#000">50828488369840,7</text><text transform="translate(51.50 514.62) scale(1 1.26)" font-size="7.9" text-anchor="end" fill="#000">5</text><text transform="translate(83.30 514.62) scale(1 1.26)" font-size="7.9" text-anchor="end" fill="#000">6</text><text transform="translate(152.60 514.62) scale(1 1.26)" font-size="7.9" text-anchor="end" fill="#000">13,6</text><text transform="translate(214.60 514.62) scale(1 1.26)" font-size="7.9" text-anchor="end" fill="#000">0,1662222222</text><text transform="translate(291.60 514.62) scale(1 1.26)" font-size="7.9" text-anchor="end" fill="#000">40192361285911,6</text><text transform="translate(387.40 514.62) scale(1 1.26)" font-size="7.9" text-anchor="end" fill="#000">7,45894116216268E-006</text><text transform="translate(458.30 514.62) scale(1 1.26)" font-size="7.9" text-anchor="end" fill="#000">7458,9411621627</text><text transform="translate(531.60 514.62) scale(1 1.26)" font-size="7.9" text-anchor="end" fill="#000">0,0122222222</text><text transform="translate(627.60 514.62) scale(1 1.26)" font-size="7.9" text-anchor="end" fill="#000">8,88241157821255E-029</text><text transform="translate(723.30 514.62) scale(1 1.26)" font-size="7.9" text-anchor="end" fill="#000">2,96285358126406E-037</text><text transform="translate(800.90 514.62) scale(1 1.26)" font-size="7.9" text-anchor="end" fill="#000">40256162788913,9</text><text transform="translate(51.50 525.26) scale(1 1.26)" font-size="7.9" text-anchor="end" fill="#000">6</text><text transform="translate(83.30 525.26) scale(1 1.26)" font-size="7.9" text-anchor="end" fill="#000">8</text><text transform="translate(152.60 525.26) scale(1 1.26)" font-size="7.9" text-anchor="end" fill="#000">13,6</text><text transform="translate(214.60 525.26) scale(1 1.26)" font-size="7.9" text-anchor="end" fill="#000">0,1652777778</text><text transform="translate(291.60 525.26) scale(1 1.26)" font-size="7.9" text-anchor="end" fill="#000">39963995596787,1</text><text transform="translate(387.40 525.26) scale(1 1.26)" font-size="7.9" text-anchor="end" fill="#000">7,50156368308933E-006</text><text transform="translate(458.30 525.26) scale(1 1.26)" font-size="7.9" text-anchor="end" fill="#000">7501,5636830893</text><text transform="translate(531.60 525.26) scale(1 1.26)" font-size="7.9" text-anchor="end" fill="#000">0,0121527778</text><text transform="translate(627.60 525.26) scale(1 1.26)" font-size="7.9" text-anchor="end" fill="#000">8,83194333060907E-029</text><text transform="translate(723.30 525.26) scale(1 1.26)" font-size="7.9" text-anchor="end" fill="#000">2,94601918591597E-037</text><text transform="translate(800.90 525.26) scale(1 1.26)" font-size="7.9" text-anchor="end" fill="#000">40027434591249,6</text><text transform="translate(51.50 535.89) scale(1 1.26)" font-size="7.9" text-anchor="end" fill="#000">7</text><text transform="translate(83.30 535.89) scale(1 1.26)" font-size="7.9" text-anchor="end" fill="#000">10</text><text transform="translate(152.60 535.89) scale(1 1.26)" font-size="7.9" text-anchor="end" fill="#000">13,6</text><text transform="translate(214.60 535.89) scale(1 1.26)" font-size="7.9" text-anchor="end" fill="#000">0,1415510204</text><text transform="translate(291.60 535.89) scale(1 1.26)" font-size="7.9" text-anchor="end" fill="#000">34226890223067,6</text><text transform="translate(387.40 535.89) scale(1 1.26)" font-size="7.9" text-anchor="end" fill="#000">0,000008759</text><text transform="translate(458.30 535.89) scale(1 1.26)" font-size="7.9" text-anchor="end" fill="#000">8758,9744801867</text><text transform="translate(531.60 535.89) scale(1 1.26)" font-size="7.9" text-anchor="end" fill="#000">0,0104081633</text><text transform="translate(627.60 535.89) scale(1 1.26)" font-size="7.9" text-anchor="end" fill="#000">7,56405735510123E-029</text><text transform="translate(723.30 535.89) scale(1 1.26)" font-size="7.9" text-anchor="end" fill="#000">2,52309794768127E-037</text><text transform="translate(800.90 535.89) scale(1 1.26)" font-size="7.9" text-anchor="end" fill="#000">34281222115234,6</text><text transform="translate(51.50 546.52) scale(1 1.26)" font-size="7.9" text-anchor="end" fill="#000">7</text><text transform="translate(83.30 546.52) scale(1 1.26)" font-size="7.9" text-anchor="end" fill="#000">9</text><text transform="translate(152.60 546.52) scale(1 1.26)" font-size="7.9" text-anchor="end" fill="#000">13,6</text><text transform="translate(214.60 546.52) scale(1 1.26)" font-size="7.9" text-anchor="end" fill="#000">0,1096497858</text><text transform="translate(291.60 546.52) scale(1 1.26)" font-size="7.9" text-anchor="end" fill="#000">26513204723751,2</text><text transform="translate(387.40 546.52) scale(1 1.26)" font-size="7.9" text-anchor="end" fill="#000">1,1307288618016E-005</text><text transform="translate(458.30 546.52) scale(1 1.26)" font-size="7.9" text-anchor="end" fill="#000">11307,288618016</text><text transform="translate(531.60 546.52) scale(1 1.26)" font-size="7.9" text-anchor="end" fill="#000">0,0080624843</text><text transform="translate(627.60 546.52) scale(1 1.26)" font-size="7.9" text-anchor="end" fill="#000">5,859352102717E-029</text><text transform="translate(723.30 546.52) scale(1 1.26)" font-size="7.9" text-anchor="end" fill="#000">1,95446948259019E-037</text><text transform="translate(800.90 546.52) scale(1 1.26)" font-size="7.9" text-anchor="end" fill="#000">26555291883018,8</text><text transform="translate(51.50 557.16) scale(1 1.26)" font-size="7.9" text-anchor="end" fill="#000">6</text><text transform="translate(83.30 557.16) scale(1 1.26)" font-size="7.9" text-anchor="end" fill="#000">7</text><text transform="translate(152.60 557.16) scale(1 1.26)" font-size="7.9" text-anchor="end" fill="#000">13,6</text><text transform="translate(214.60 557.16) scale(1 1.26)" font-size="7.9" text-anchor="end" fill="#000">0,1002267574</text><text transform="translate(291.60 557.16) scale(1 1.26)" font-size="7.9" text-anchor="end" fill="#000">24234726192803,8</text><text transform="translate(387.40 557.16) scale(1 1.26)" font-size="7.9" text-anchor="end" fill="#000">1,23703670350944E-005</text><text transform="translate(458.30 557.16) scale(1 1.26)" font-size="7.9" text-anchor="end" fill="#000">12370,3670350944</text><text transform="translate(531.60 557.16) scale(1 1.26)" font-size="7.9" text-anchor="end" fill="#000">0,0073696145</text><text transform="translate(627.60 557.16) scale(1 1.26)" font-size="7.9" text-anchor="end" fill="#000">5,35581403138976E-029</text><text transform="translate(723.30 557.16) scale(1 1.26)" font-size="7.9" text-anchor="end" fill="#000">1,78650726143009E-037</text><text transform="translate(800.90 557.16) scale(1 1.26)" font-size="7.9" text-anchor="end" fill="#000">24273196486821,9</text><text transform="translate(51.50 567.79) scale(1 1.26)" font-size="7.9" text-anchor="end" fill="#000">8</text><text transform="translate(83.30 567.79) scale(1 1.26)" font-size="7.9" text-anchor="end" fill="#000">10</text><text transform="translate(152.60 567.79) scale(1 1.26)" font-size="7.9" text-anchor="end" fill="#000">13,6</text><text transform="translate(214.60 567.79) scale(1 1.26)" font-size="7.9" text-anchor="end" fill="#000">0,0765</text><text transform="translate(291.60 567.79) scale(1 1.26)" font-size="7.9" text-anchor="end" fill="#000">18497620819084,3</text><text transform="translate(387.40 567.79) scale(1 1.26)" font-size="7.9" text-anchor="end" fill="#000">1,62070820313658E-005</text><text transform="translate(458.30 567.79) scale(1 1.26)" font-size="7.9" text-anchor="end" fill="#000">16207,0820313658</text><text transform="translate(531.60 567.79) scale(1 1.26)" font-size="7.9" text-anchor="end" fill="#000">0,005625</text><text transform="translate(627.60 567.79) scale(1 1.26)" font-size="7.9" text-anchor="end" fill="#000">4,08792805588191E-029</text><text transform="translate(723.30 567.79) scale(1 1.26)" font-size="7.9" text-anchor="end" fill="#000">1,36358602319539E-037</text><text transform="translate(800.90 567.79) scale(1 1.26)" font-size="7.9" text-anchor="end" fill="#000">18526984010806,9</text><text transform="translate(51.50 578.42) scale(1 1.26)" font-size="7.9" text-anchor="end" fill="#000">7</text><text transform="translate(83.30 578.42) scale(1 1.26)" font-size="7.9" text-anchor="end" fill="#000">8</text><text transform="translate(152.60 578.42) scale(1 1.26)" font-size="7.9" text-anchor="end" fill="#000">13,6</text><text transform="translate(214.60 578.42) scale(1 1.26)" font-size="7.9" text-anchor="end" fill="#000">0,0650510204</text><text transform="translate(291.60 578.42) scale(1 1.26)" font-size="7.9" text-anchor="end" fill="#000">15729269403983,3</text><text transform="translate(387.40 578.42) scale(1 1.26)" font-size="7.9" text-anchor="end" fill="#000">1,90595284688862E-005</text><text transform="translate(458.30 578.42) scale(1 1.26)" font-size="7.9" text-anchor="end" fill="#000">19059,5284688862</text><text transform="translate(531.60 578.42) scale(1 1.26)" font-size="7.9" text-anchor="end" fill="#000">0,0047831633</text><text transform="translate(627.60 578.42) scale(1 1.26)" font-size="7.9" text-anchor="end" fill="#000">3,47612929921931E-029</text><text transform="translate(723.30 578.42) scale(1 1.26)" font-size="7.9" text-anchor="end" fill="#000">1,15951192448588E-037</text><text transform="translate(800.90 578.42) scale(1 1.26)" font-size="7.9" text-anchor="end" fill="#000">15754238104427,7</text><text transform="translate(51.50 589.05) scale(1 1.26)" font-size="7.9" text-anchor="end" fill="#000">8</text><text transform="translate(83.30 589.05) scale(1 1.26)" font-size="7.9" text-anchor="end" fill="#000">9</text><text transform="translate(152.60 589.05) scale(1 1.26)" font-size="7.9" text-anchor="end" fill="#000">13,6</text><text transform="translate(214.60 589.05) scale(1 1.26)" font-size="7.9" text-anchor="end" fill="#000">0,0445987654</text><text transform="translate(291.60 589.05) scale(1 1.26)" font-size="7.9" text-anchor="end" fill="#000">10783935319768</text><text transform="translate(387.40 589.05) scale(1 1.26)" font-size="7.9" text-anchor="end" fill="#000">2,77999124726252E-005</text><text transform="translate(458.30 589.05) scale(1 1.26)" font-size="7.9" text-anchor="end" fill="#000">27799,9124726252</text><text transform="translate(531.60 589.05) scale(1 1.26)" font-size="7.9" text-anchor="end" fill="#000">0,003279321</text><text transform="translate(627.60 589.05) scale(1 1.26)" font-size="7.9" text-anchor="end" fill="#000">2,38322280349769E-029</text><text transform="translate(723.30 589.05) scale(1 1.26)" font-size="7.9" text-anchor="end" fill="#000">7,94957558104309E-038</text><text transform="translate(800.90 589.05) scale(1 1.26)" font-size="7.9" text-anchor="end" fill="#000">10801053778591,2</text><text transform="translate(51.50 599.69) scale(1 1.26)" font-size="7.9" text-anchor="end" fill="#000">9</text><text transform="translate(83.30 599.69) scale(1 1.26)" font-size="7.9" text-anchor="end" fill="#000">10</text><text transform="translate(152.60 599.69) scale(1 1.26)" font-size="7.9" text-anchor="end" fill="#000">13,6</text><text transform="translate(214.60 599.69) scale(1 1.26)" font-size="7.9" text-anchor="end" fill="#000">0,0319012346</text><text transform="translate(291.60 599.69) scale(1 1.26)" font-size="7.9" text-anchor="end" fill="#000">7713685499316,37</text><text transform="translate(387.40 599.69) scale(1 1.26)" font-size="7.9" text-anchor="end" fill="#000">0,000038865</text><text transform="translate(458.30 599.69) scale(1 1.26)" font-size="7.9" text-anchor="end" fill="#000">38865,009213374</text><text transform="translate(531.60 599.69) scale(1 1.26)" font-size="7.9" text-anchor="end" fill="#000">0,002345679</text><text transform="translate(627.60 599.69) scale(1 1.26)" font-size="7.9" text-anchor="end" fill="#000">1,70470525238423E-029</text><text transform="translate(723.30 599.69) scale(1 1.26)" font-size="7.9" text-anchor="end" fill="#000">5,68628465091082E-038</text><text transform="translate(800.90 599.69) scale(1 1.26)" font-size="7.9" text-anchor="end" fill="#000">7725930232215,79</text><rect x="724.6500000000001" y="112.253" width="77.09999999999991" height="10.832999999999998" fill="none" stroke="#000" stroke-width="1.5"/><rect x="801.1999999999999" y="121.83599999999998" width="3" height="3" fill="#000"/><rect x="1188.3" y="91.3" width="11.700000000000045" height="540.4000000000001" fill="url(#gTrackV)"/><rect x="1188.3" y="91.4" width="10.700000000000045" height="1.6" fill="#000"/><rect x="1188.8" y="93.2" width="9.799999999999955" height="11.0" rx="1" fill="#c4d5fb" stroke="#e8eefc" stroke-width="0.5"/><path d="M1191.4999999999998 99.7 l2.2 -2.2 l2.2 2.2" fill="none" stroke="#4d6185" stroke-width="1.1"/><rect x="1188.8" y="104.6" width="9.8" height="252.4" rx="1" fill="url(#gScrollV)" stroke="#d8e2fa" stroke-width="0.5"/><rect x="1188.8" y="621.5" width="9.799999999999955" height="9.399999999999977" rx="1" fill="#c4d5fb" stroke="#e8eefc" stroke-width="0.5"/><path d="M1191.4999999999998 625.2 l2.2 2.2 l2.2 -2.2" fill="none" stroke="#4d6185" stroke-width="1.1"/><rect x="1199" y="91.3" width="1" height="540.4000000000001" fill="#e8e6da"/><rect x="0" y="631.4" width="1200" height="10.200000000000045" fill="#ece9d8"/><rect x="0" y="631.4" width="0.9" height="10.200000000000045" fill="#8a8778"/><rect x="2.6" y="632.6" width="8.2" height="8.4" rx="1.2" fill="#f2f1ea" stroke="#dcd9cb" stroke-width="0.5"/><rect x="12.8" y="632.6" width="8.2" height="8.4" rx="1.2" fill="#f2f1ea" stroke="#dcd9cb" stroke-width="0.5"/><rect x="23.3" y="632.6" width="8.2" height="8.4" rx="1.2" fill="#f2f1ea" stroke="#dcd9cb" stroke-width="0.5"/><rect x="33.8" y="632.6" width="8.2" height="8.4" rx="1.2" fill="#f2f1ea" stroke="#dcd9cb" stroke-width="0.5"/><rect x="4.6" y="634.5" width="0.8" height="4.6" fill="#b0ae9e"/><path d="M9 634.5 v4.6 l-3 -2.3z" fill="#b0ae9e"/><path d="M18.6 634.5 v4.6 l-3 -2.3z" fill="#b0ae9e"/><path d="M26.2 634.5 v4.6 l3 -2.3z" fill="#b0ae9e"/><path d="M36 634.5 v4.6 l3 -2.3z" fill="#b0ae9e"/><rect x="39.6" y="634.5" width="0.8" height="4.6" fill="#b0ae9e"/><rect x="78" y="631.3" width="88" height="0.7" fill="#8a8778"/><path d="M108.3 641.3 L111 631.6 L141.8 631.6 L138 641.3 Z" fill="#ece9d8" stroke="#8a8778" stroke-width="0.7"/><path d="M77 641.3 L80 631.6 L110.6 631.6 L107.2 641.3 Z" fill="#ece9d8" stroke="#8a8778" stroke-width="0.7"/><path d="M44.2 631.2 L48.2 641.3 L76.2 641.3 L79.6 631.2" fill="#f8f7f2" stroke="#6a6858" stroke-width="0.8"/><text transform="translate(49 639.5) scale(1 1.1)" font-size="7.4" font-weight="bold" fill="#000" textLength="25.3" lengthAdjust="spacingAndGlyphs">Sheet1</text><text transform="translate(81.4 639.3) scale(1 1.1)" font-size="7" fill="#000" textLength="21.8" lengthAdjust="spacingAndGlyphs">Sheet2</text><text transform="translate(111.9 639.3) scale(1 1.1)" font-size="7" fill="#000" textLength="21.8" lengthAdjust="spacingAndGlyphs">Sheet3</text><rect x="165.6" y="631.3" width="0.8" height="10.3" fill="#8a8778"/><rect x="166.4" y="631.3" width="3" height="10.3" fill="#f6f5ef"/><rect x="169.3" y="631.3" width="0.8" height="10.3" fill="#8a8778"/><rect x="170.2" y="631.6" width="1016" height="10" fill="url(#gTrackH)"/><rect x="170.6" y="632.2" width="9.599999999999994" height="9.0" rx="1" fill="#c4d5fb" stroke="#e8eefc" stroke-width="0.5"/><path d="M176.39999999999998 634.5 l-2.2 2.2 l2.2 2.2" fill="none" stroke="#4d6185" stroke-width="1.1"/><rect x="180.8" y="632.2" width="470.5" height="9" rx="1" fill="url(#gScrollH)" stroke="#d8e2fa" stroke-width="0.5"/><rect x="1176.2" y="632.2" width="9.0" height="9.0" rx="1" fill="#c4d5fb" stroke="#e8eefc" stroke-width="0.5"/><path d="M1179.7 634.5 l2.2 2.2 l-2.2 2.2" fill="none" stroke="#4d6185" stroke-width="1.1"/><rect x="1186" y="631.6" width="1.8" height="10" fill="#000"/><rect x="1188" y="631.4" width="12" height="10.2" fill="#ece9d8"/><rect x="0" y="641.6" width="1200" height="15.4" fill="url(#gStatus)"/><text transform="translate(5.9 653.4) scale(1 1.12)" font-size="7" fill="#000" textLength="33.4" lengthAdjust="spacingAndGlyphs">Sheet 1 / 3</text><rect x="323" y="644" width="0.8" height="11.5" fill="#c8c4b0"/><rect x="632.5" y="644" width="0.8" height="11.5" fill="#c8c4b0"/><rect x="665.6" y="644" width="0.8" height="11.5" fill="#c8c4b0"/><rect x="685.6" y="644" width="0.8" height="11.5" fill="#c8c4b0"/><rect x="695.6" y="644" width="0.8" height="11.5" fill="#c8c4b0"/><rect x="713.75" y="644" width="0.8" height="11.5" fill="#c8c4b0"/><rect x="1077" y="644" width="0.8" height="11.5" fill="#c8c4b0"/><rect x="1172" y="644" width="0.8" height="11.5" fill="#c8c4b0"/><text transform="translate(326.1 653.4) scale(1 1.12)" font-size="7" fill="#000" textLength="22.9" lengthAdjust="spacingAndGlyphs">Default</text><text transform="translate(667.8 653.4) scale(1 1.12)" font-size="7" fill="#000" textLength="12.4" lengthAdjust="spacingAndGlyphs">STD</text><text transform="translate(854.8 653.4) scale(1 1.12)" font-size="7" fill="#000" textLength="78.4" lengthAdjust="spacingAndGlyphs">Sum=3293686046036310</text><text transform="translate(1175.6 653.4) scale(1 1.12)" font-size="7" fill="#000" textLength="17.9" lengthAdjust="spacingAndGlyphs">100%</text><rect x="1090" y="649.3" width="68" height="0.9" fill="#a09e90"/><circle cx="1084.3" cy="649.8" r="3.2" fill="#c8d8f0" stroke="#6080b0" stroke-width="0.7"/><rect x="1082.6" y="649.4" width="3.4" height="0.9" fill="#304868"/><circle cx="1164" cy="649.8" r="3.2" fill="#c8d8f0" stroke="#6080b0" stroke-width="0.7"/><path d="M1162.3 649.8 h3.4 M1164 648.1 v3.4" stroke="#304868" stroke-width="0.9"/><circle cx="1123.3" cy="649.8" r="2.4" fill="#6a90b8" stroke="#40607a" stroke-width="0.6"/></svg>
</body></html>
